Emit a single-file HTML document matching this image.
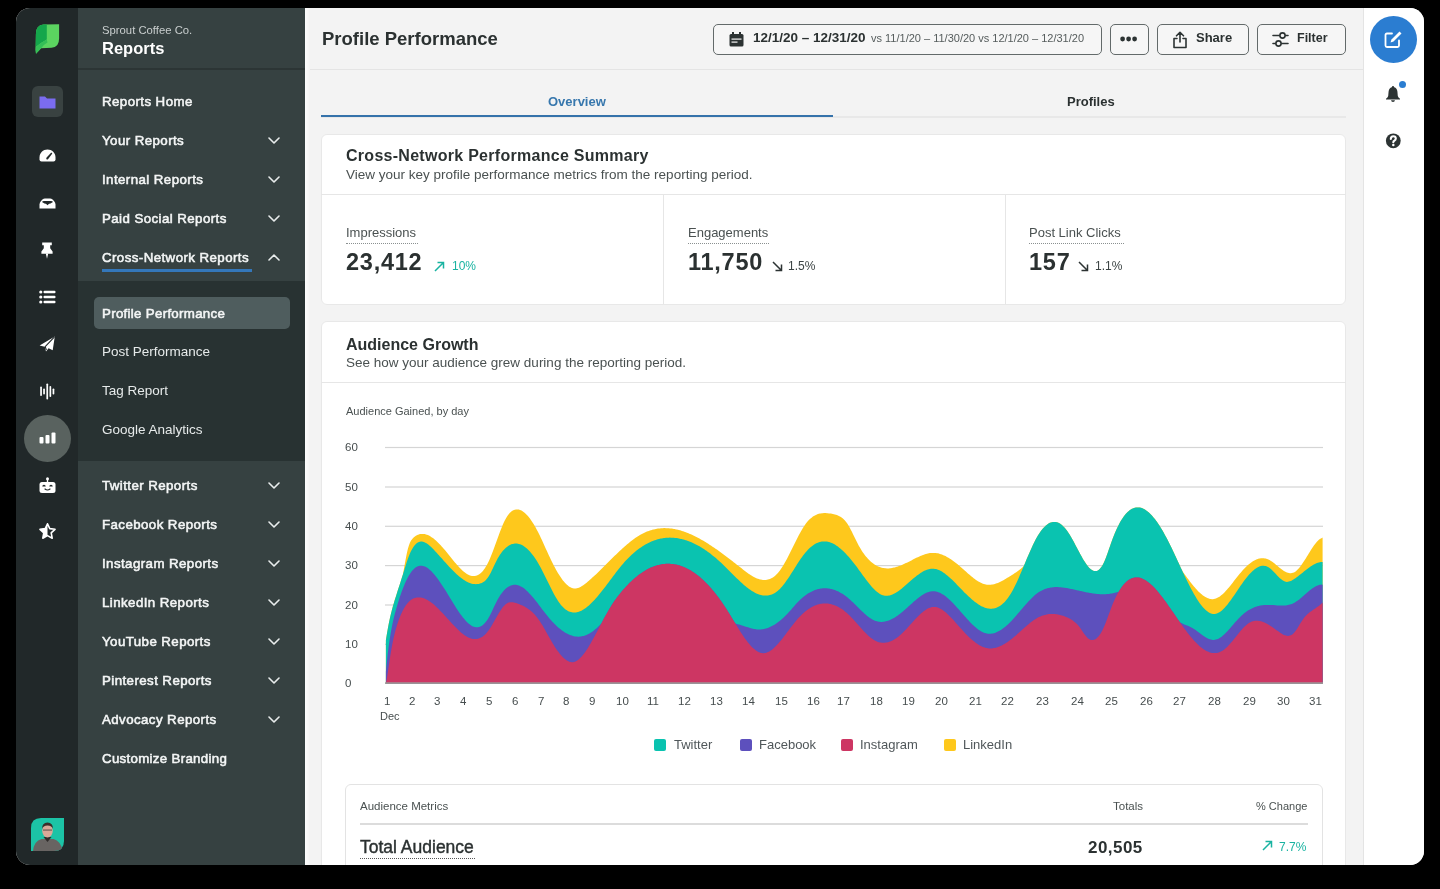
<!DOCTYPE html>
<html><head><meta charset="utf-8"><style>
*{box-sizing:border-box;margin:0;padding:0}
html,body{width:1440px;height:889px;overflow:hidden;background:#000}
body{font-family:"Liberation Sans",sans-serif;position:relative}
#win{position:absolute;left:0;top:0;width:1440px;height:889px;clip-path:inset(8px 16px 24px 16px round 14px);background:#f3f3f3;overflow:hidden}
.a{position:absolute;white-space:nowrap;will-change:transform}
svg.a{overflow:visible}
</style></head><body><div id="win">
<div class="a" style="left:16px;top:8px;width:62px;height:857px;background:#212829"></div>
<div class="a" style="left:78px;top:8px;width:227px;height:857px;background:#364141"></div>
<div class="a" style="left:78px;top:68px;width:227px;height:2px;background:#2c3535"></div>
<div class="a" style="left:78px;top:281px;width:227px;height:180px;background:#283232"></div>
<div class="a" style="left:1363px;top:8px;width:61px;height:857px;background:#fff;border-left:1px solid #e4e4e4"></div>
<div class="a" style="left:305px;top:69px;width:1058px;height:1px;background:#e4e4e4"></div>
<div class="a" style="left:305px;top:8px;width:5px;height:857px;background:linear-gradient(90deg,#fdfdfd,#f8f8f8 60%,#f3f3f3)"></div>
<svg class="a" style="left:34px;top:23px;" width="27" height="33" viewBox="0 0 27 33"><path d="M2 30.8 L7.1 25.2 L17.5 24.8 Q25.1 24.5 25.1 15.5 L25.1 1.3 L9.5 1.5 Q1.9 2 1.9 11 L1.6 26.9 Z" fill="#5bd460"/><path d="M1.9 11 Q1.9 2 9.5 1.5 L12.8 1.4 L12.8 16.5 Q8 19 1.7 24 Z" fill="#14a64b"/><path d="M1.7 24 Q8 19 12.8 16.5 L13.5 19.5 Q9 22 7.1 25.2 L2 30.8 L1.6 26.9 Z" fill="#34bf57"/></svg>
<div class="a" style="left:32px;top:86px;width:31px;height:31px;background:#394241;border-radius:6px"></div>
<svg class="a" style="left:39px;top:96px;" width="17" height="13" viewBox="0 0 17 13"><path d="M0.5 0.5 H6 L8 2.5 H16.5 V12.5 H0.5 Z" fill="#7b6cf0"/></svg>
<svg class="a" style="left:39px;top:149px;" width="17" height="13" viewBox="0 0 17 13"><path d="M8.5 0.5 C13 0.5 16.5 4 16.5 8.5 V10.5 Q16.5 12.5 14.5 12.5 H2.5 Q0.5 12.5 0.5 10.5 V8.5 C0.5 4 4 0.5 8.5 0.5 Z" fill="#fff"/><path d="M12.3 3.6 L13.3 4.6 L9.2 10 Q8.4 10.9 7.5 10.2 Q6.8 9.4 7.6 8.5 Z" fill="#212829"/></svg>
<svg class="a" style="left:39px;top:198px;" width="17" height="11" viewBox="0 0 17 11"><path d="M0.5 10.5 V6.5 Q0.5 4.5 2 3 L3.5 1.5 Q4.5 0.5 6 0.5 H11 Q12.5 0.5 13.5 1.5 L15 3 Q16.5 4.5 16.5 6.5 V10.5 Z" fill="#fff"/><path d="M3 4 Q3.5 3 5 3 H12 Q13.5 3 14 4 L11.5 5.5 Q10 5.5 9.5 6.3 L8.5 7.3 L7.5 6.3 Q7 5.5 5.5 5.5 Z" fill="#212829"/></svg>
<svg class="a" style="left:41px;top:240px;" width="12" height="19" viewBox="0 0 12 19"><path d="M1.2 2.5 H10.8 V5.2 H9.2 V8.2 L11.6 11.6 V13.8 H0.4 V11.6 L2.8 8.2 V5.2 H1.2 Z" fill="#fff"/><path d="M4.8 13.5 H7.2 L6 18.8 Z" fill="#fff"/></svg>
<svg class="a" style="left:39px;top:290px;" width="17" height="14" viewBox="0 0 17 14"><circle cx="1.8" cy="2" r="1.6" fill="#fff"/><circle cx="1.8" cy="7" r="1.6" fill="#fff"/><circle cx="1.8" cy="12" r="1.6" fill="#fff"/><rect x="4.5" y="0.7" width="12" height="2.6" rx="1" fill="#fff"/><rect x="4.5" y="5.7" width="12" height="2.6" rx="1" fill="#fff"/><rect x="4.5" y="10.7" width="12" height="2.6" rx="1" fill="#fff"/></svg>
<svg class="a" style="left:39px;top:336px;" width="17" height="16" viewBox="0 0 17 16"><path d="M15.8 0.4 L0.6 9.4 L5.8 10.8 L7 15.5 L9.6 12.3 L13.7 14.3 Z" fill="#fff"/><path d="M15.5 0.8 L6.2 10.6 L7.4 14" stroke="#212829" stroke-width="1.1" fill="none"/></svg>
<svg class="a" style="left:40px;top:383px;" width="15" height="17" viewBox="0 0 15 17"><rect x="0.2" y="3.5" width="1.7" height="9.5" rx=".8" fill="#fff"/><rect x="3.2" y="5.5" width="1.7" height="6" rx=".8" fill="#fff"/><rect x="6.4" y="0.5" width="1.7" height="16" rx=".8" fill="#fff"/><rect x="9.5" y="3" width="1.7" height="11" rx=".8" fill="#fff"/><rect x="12.6" y="5.5" width="1.7" height="6" rx=".8" fill="#fff"/></svg>
<div class="a" style="left:24px;top:415px;width:47px;height:47px;background:#59625f;border-radius:50%"></div>
<svg class="a" style="left:39px;top:432px;" width="17" height="12" viewBox="0 0 17 12"><rect x="0.5" y="5" width="4" height="6.5" rx="1" fill="#fff"/><rect x="6.5" y="3" width="4" height="8.5" rx="1" fill="#fff"/><rect x="12.5" y="0.5" width="4" height="11" rx="1" fill="#fff"/></svg>
<svg class="a" style="left:39px;top:477px;" width="17" height="17" viewBox="0 0 17 17"><circle cx="8.5" cy="1.8" r="1.5" fill="#fff"/><rect x="7.8" y="2.5" width="1.4" height="3" fill="#fff"/><rect x="0.5" y="5" width="16" height="11" rx="2.5" fill="#fff"/><path d="M4 9 Q5 8 6 9 M11 9 Q12 8 13 9 M6 12 Q8.5 14 11 12" stroke="#212829" stroke-width="1.2" fill="none" stroke-linecap="round"/></svg>
<svg class="a" style="left:39px;top:523px;" width="17" height="17" viewBox="0 0 17 17"><path d="M8.5 0.8 L10.8 5.6 L16 6.3 L12.2 9.9 L13.2 15.2 L8.5 12.6 L3.8 15.2 L4.8 9.9 L1 6.3 L6.2 5.6 Z" fill="none" stroke="#fff" stroke-width="1.6" stroke-linejoin="round"/><path d="M8.5 0.8 L6.2 5.6 L1 6.3 L4.8 9.9 L3.8 15.2 L8.5 12.6 Z" fill="#fff"/></svg>
<svg class="a" style="left:31px;top:818px;" width="33" height="33" viewBox="0 0 33 33"><defs><clipPath id="av"><path d="M0 10 Q0 0 10 0 H33 V23 Q33 33 23 33 H0 Z"/></clipPath></defs><g clip-path="url(#av)"><rect width="33" height="33" fill="#1cc3a6"/><path d="M2 33 Q3 23 10.5 21 L22.5 21 Q30 23 31.5 33 Z" fill="#686462"/><path d="M12.5 19 H20.5 L16.5 24 Z" fill="#2f2b2a"/><ellipse cx="16.5" cy="12.8" rx="5.3" ry="6.8" fill="#d9a898"/><path d="M11 11 Q11 4.5 16.5 4.5 Q22 4.5 22 11 Q21 7.5 16.5 7.5 Q12 7.5 11 11 Z" fill="#3b2e2a"/><rect x="12" y="11.3" width="9" height="1.6" fill="#4a4040" opacity=".55"/></g></svg>
<div class="a" style="left:102.00px;top:24.63px;font-size:11.3px;line-height:11.3px;color:#c9cece;">Sprout Coffee Co.</div>
<div class="a" style="left:102.00px;top:40.03px;font-size:16.5px;line-height:16.5px;font-weight:bold;color:#ffffff;">Reports</div>
<div class="a" style="left:102.00px;top:95.34px;font-size:13.3px;line-height:13.3px;color:#f4f6f6;letter-spacing:0.42px;-webkit-text-stroke:0.55px #f4f6f6;">Reports Home</div>
<div class="a" style="left:102.00px;top:134.34px;font-size:13.3px;line-height:13.3px;color:#f4f6f6;letter-spacing:0.42px;-webkit-text-stroke:0.55px #f4f6f6;">Your Reports</div>
<svg class="a" style="left:268.4px;top:136.5px;" width="12" height="7" viewBox="0 0 12 7"><path d="M1 1 L6 6 L11 1" fill="none" stroke="#e9eded" stroke-width="1.6" stroke-linecap="round" stroke-linejoin="round"/></svg>
<div class="a" style="left:102.00px;top:173.34px;font-size:13.3px;line-height:13.3px;color:#f4f6f6;letter-spacing:0.42px;-webkit-text-stroke:0.55px #f4f6f6;">Internal Reports</div>
<svg class="a" style="left:268.4px;top:175.5px;" width="12" height="7" viewBox="0 0 12 7"><path d="M1 1 L6 6 L11 1" fill="none" stroke="#e9eded" stroke-width="1.6" stroke-linecap="round" stroke-linejoin="round"/></svg>
<div class="a" style="left:102.00px;top:212.34px;font-size:13.3px;line-height:13.3px;color:#f4f6f6;letter-spacing:0.42px;-webkit-text-stroke:0.55px #f4f6f6;">Paid Social Reports</div>
<svg class="a" style="left:268.4px;top:214.5px;" width="12" height="7" viewBox="0 0 12 7"><path d="M1 1 L6 6 L11 1" fill="none" stroke="#e9eded" stroke-width="1.6" stroke-linecap="round" stroke-linejoin="round"/></svg>
<div class="a" style="left:102.00px;top:251.34px;font-size:13.3px;line-height:13.3px;color:#f4f6f6;letter-spacing:0.42px;-webkit-text-stroke:0.55px #f4f6f6;">Cross-Network Reports</div>
<svg class="a" style="left:268.4px;top:253.5px;" width="12" height="7" viewBox="0 0 12 7"><path d="M1 6 L6 1 L11 6" fill="none" stroke="#e9eded" stroke-width="1.6" stroke-linecap="round" stroke-linejoin="round"/></svg>
<div class="a" style="left:102px;top:269px;width:150px;height:2.6px;background:#3477ba"></div>
<div class="a" style="left:94px;top:297px;width:196px;height:32px;background:#4f5d5e;border-radius:5px"></div>
<div class="a" style="left:102.00px;top:306.54px;font-size:13.3px;line-height:13.3px;color:#f4f6f6;letter-spacing:0.3px;-webkit-text-stroke:0.55px #f4f6f6;">Profile Performance</div>
<div class="a" style="left:102.00px;top:344.77px;font-size:13.5px;line-height:13.5px;color:#e6eaea;">Post Performance</div>
<div class="a" style="left:102.00px;top:384.27px;font-size:13.5px;line-height:13.5px;color:#e6eaea;">Tag Report</div>
<div class="a" style="left:102.00px;top:423.27px;font-size:13.5px;line-height:13.5px;color:#e6eaea;">Google Analytics</div>
<div class="a" style="left:102.00px;top:479.34px;font-size:13.3px;line-height:13.3px;color:#f4f6f6;letter-spacing:0.42px;-webkit-text-stroke:0.55px #f4f6f6;">Twitter Reports</div>
<svg class="a" style="left:268.4px;top:481.5px;" width="12" height="7" viewBox="0 0 12 7"><path d="M1 1 L6 6 L11 1" fill="none" stroke="#e9eded" stroke-width="1.6" stroke-linecap="round" stroke-linejoin="round"/></svg>
<div class="a" style="left:102.00px;top:518.34px;font-size:13.3px;line-height:13.3px;color:#f4f6f6;letter-spacing:0.42px;-webkit-text-stroke:0.55px #f4f6f6;">Facebook Reports</div>
<svg class="a" style="left:268.4px;top:520.5px;" width="12" height="7" viewBox="0 0 12 7"><path d="M1 1 L6 6 L11 1" fill="none" stroke="#e9eded" stroke-width="1.6" stroke-linecap="round" stroke-linejoin="round"/></svg>
<div class="a" style="left:102.00px;top:557.34px;font-size:13.3px;line-height:13.3px;color:#f4f6f6;letter-spacing:0.42px;-webkit-text-stroke:0.55px #f4f6f6;">Instagram Reports</div>
<svg class="a" style="left:268.4px;top:559.5px;" width="12" height="7" viewBox="0 0 12 7"><path d="M1 1 L6 6 L11 1" fill="none" stroke="#e9eded" stroke-width="1.6" stroke-linecap="round" stroke-linejoin="round"/></svg>
<div class="a" style="left:102.00px;top:596.34px;font-size:13.3px;line-height:13.3px;color:#f4f6f6;letter-spacing:0.42px;-webkit-text-stroke:0.55px #f4f6f6;">LinkedIn Reports</div>
<svg class="a" style="left:268.4px;top:598.5px;" width="12" height="7" viewBox="0 0 12 7"><path d="M1 1 L6 6 L11 1" fill="none" stroke="#e9eded" stroke-width="1.6" stroke-linecap="round" stroke-linejoin="round"/></svg>
<div class="a" style="left:102.00px;top:635.34px;font-size:13.3px;line-height:13.3px;color:#f4f6f6;letter-spacing:0.42px;-webkit-text-stroke:0.55px #f4f6f6;">YouTube Reports</div>
<svg class="a" style="left:268.4px;top:637.5px;" width="12" height="7" viewBox="0 0 12 7"><path d="M1 1 L6 6 L11 1" fill="none" stroke="#e9eded" stroke-width="1.6" stroke-linecap="round" stroke-linejoin="round"/></svg>
<div class="a" style="left:102.00px;top:674.34px;font-size:13.3px;line-height:13.3px;color:#f4f6f6;letter-spacing:0.42px;-webkit-text-stroke:0.55px #f4f6f6;">Pinterest Reports</div>
<svg class="a" style="left:268.4px;top:676.5px;" width="12" height="7" viewBox="0 0 12 7"><path d="M1 1 L6 6 L11 1" fill="none" stroke="#e9eded" stroke-width="1.6" stroke-linecap="round" stroke-linejoin="round"/></svg>
<div class="a" style="left:102.00px;top:713.34px;font-size:13.3px;line-height:13.3px;color:#f4f6f6;letter-spacing:0.42px;-webkit-text-stroke:0.55px #f4f6f6;">Advocacy Reports</div>
<svg class="a" style="left:268.4px;top:715.5px;" width="12" height="7" viewBox="0 0 12 7"><path d="M1 1 L6 6 L11 1" fill="none" stroke="#e9eded" stroke-width="1.6" stroke-linecap="round" stroke-linejoin="round"/></svg>
<div class="a" style="left:102.00px;top:752.34px;font-size:13.3px;line-height:13.3px;color:#f4f6f6;letter-spacing:0.3px;-webkit-text-stroke:0.55px #f4f6f6;">Customize Branding</div>
<div class="a" style="left:322.00px;top:29.54px;font-size:18.5px;line-height:18.5px;font-weight:bold;color:#2b3131;">Profile Performance</div>
<div class="a" style="left:713px;top:24px;width:389px;height:31px;border:1.2px solid #636a6a;border-radius:5px;background:#f6f6f6"></div>
<div class="a" style="left:1110px;top:24px;width:39px;height:31px;border:1.2px solid #636a6a;border-radius:5px;background:#f6f6f6"></div>
<div class="a" style="left:1157px;top:24px;width:92px;height:31px;border:1.2px solid #636a6a;border-radius:5px;background:#f6f6f6"></div>
<div class="a" style="left:1257px;top:24px;width:89px;height:31px;border:1.2px solid #636a6a;border-radius:5px;background:#f6f6f6"></div>
<svg class="a" style="left:729px;top:32px;" width="15" height="15" viewBox="0 0 15 15"><rect x="0.5" y="2" width="14" height="12.5" rx="1.5" fill="#2c3333"/><rect x="3" y="0" width="2" height="3.5" fill="#2c3333"/><rect x="10" y="0" width="2" height="3.5" fill="#2c3333"/><rect x="2.5" y="6.5" width="10" height="1.2" fill="#f6f6f6"/><rect x="2.5" y="9.5" width="6" height="1.2" fill="#f6f6f6"/></svg>
<div class="a" style="left:752.50px;top:31.17px;font-size:13.5px;line-height:13.5px;font-weight:bold;color:#2b3131;">12/1/20 – 12/31/20</div>
<div class="a" style="left:871.00px;top:33.29px;font-size:11px;line-height:11px;color:#555c5c;">vs 11/1/20 – 11/30/20 vs 12/1/20 – 12/31/20</div>
<svg class="a" style="left:1120px;top:36px;" width="18" height="6" viewBox="0 0 18 6"><circle cx="2.6" cy="3" r="2.4" fill="#2c3333"/><circle cx="8.6" cy="3" r="2.4" fill="#2c3333"/><circle cx="14.6" cy="3" r="2.4" fill="#2c3333"/></svg>
<svg class="a" style="left:1172px;top:31px;" width="16" height="18" viewBox="0 0 16 18"><path d="M8 1.5 V11 M4.5 4.8 L8 1.3 L11.5 4.8 M5 7.5 H2 V16.5 H14 V7.5 H11" fill="none" stroke="#2c3333" stroke-width="1.6" stroke-linecap="round" stroke-linejoin="round"/></svg>
<div class="a" style="left:1196.00px;top:31.30px;font-size:13px;line-height:13px;font-weight:bold;color:#2b3131;">Share</div>
<svg class="a" style="left:1272px;top:31px;" width="17" height="17" viewBox="0 0 17 17"><path d="M1 4.5 H16 M1 12.5 H16" stroke="#2c3333" stroke-width="1.6" stroke-linecap="round"/><circle cx="10.5" cy="4.5" r="2.6" fill="#f6f6f6" stroke="#2c3333" stroke-width="1.6"/><circle cx="6.5" cy="12.5" r="2.6" fill="#f6f6f6" stroke="#2c3333" stroke-width="1.6"/></svg>
<div class="a" style="left:1297.00px;top:32.12px;font-size:12.5px;line-height:12.5px;font-weight:bold;color:#2b3131;">Filter</div>
<div class="a" style="left:548.40px;top:94.90px;font-size:13px;line-height:13px;font-weight:bold;color:#3777ad;">Overview</div>
<div class="a" style="left:1066.60px;top:95.20px;font-size:13px;line-height:13px;font-weight:bold;color:#2b3131;">Profiles</div>
<div class="a" style="left:321px;top:115.5px;width:1025px;height:2px;background:#e8e8e8"></div>
<div class="a" style="left:321px;top:115.3px;width:512px;height:2.3px;background:#3572aa"></div>
<div class="a" style="left:321px;top:134px;width:1025px;height:171px;background:#fff;border:1px solid #e8e8e8;border-radius:6px"></div>
<div class="a" style="left:321px;top:194px;width:1025px;height:1px;background:#e6e6e6"></div>
<div class="a" style="left:663px;top:195px;width:1px;height:109px;background:#e6e6e6"></div>
<div class="a" style="left:1005px;top:195px;width:1px;height:109px;background:#e6e6e6"></div>
<div class="a" style="left:345.80px;top:148.26px;font-size:16px;line-height:16px;font-weight:bold;color:#2b3131;letter-spacing:0.28px;">Cross-Network Performance Summary</div>
<div class="a" style="left:345.80px;top:167.77px;font-size:13.5px;line-height:13.5px;color:#4a5151;">View your key profile performance metrics from the reporting period.</div>
<div class="a" style="left:345.80px;top:225.70px;font-size:13px;line-height:13px;color:#4a5151;">Impressions</div>
<div class="a" style="left:345.8px;top:243px;width:72px;height:2px;border-top:1.5px dotted #8a9090"></div>
<div class="a" style="left:345.80px;top:250.71px;font-size:23.5px;line-height:23.5px;font-weight:bold;color:#2b3131;letter-spacing:0.75px;">23,412</div>
<div class="a" style="left:688.00px;top:225.70px;font-size:13px;line-height:13px;color:#4a5151;">Engagements</div>
<div class="a" style="left:688px;top:243px;width:81px;height:2px;border-top:1.5px dotted #8a9090"></div>
<div class="a" style="left:688.00px;top:250.71px;font-size:23.5px;line-height:23.5px;font-weight:bold;color:#2b3131;letter-spacing:0.75px;">11,750</div>
<div class="a" style="left:1029.30px;top:225.70px;font-size:13px;line-height:13px;color:#4a5151;">Post Link Clicks</div>
<div class="a" style="left:1029.3px;top:243px;width:95px;height:2px;border-top:1.5px dotted #8a9090"></div>
<div class="a" style="left:1029.30px;top:250.71px;font-size:23.5px;line-height:23.5px;font-weight:bold;color:#2b3131;letter-spacing:0.75px;">157</div>
<svg class="a" style="left:434px;top:261px;" width="11" height="11" viewBox="0 0 11 11"><path d="M1 10 L9.5 1.5 M3.5 1.5 H9.5 V7.5" fill="none" stroke="#19b3a1" stroke-width="1.5"/></svg>
<div class="a" style="left:452.00px;top:259.84px;font-size:12px;line-height:12px;color:#19b3a1;">10%</div>
<svg class="a" style="left:772px;top:261px;" width="11" height="11" viewBox="0 0 11 11"><path d="M1 1 L9.5 9.5 M3.5 9.5 H9.5 V3.5" fill="none" stroke="#2c3333" stroke-width="1.5"/></svg>
<div class="a" style="left:788.40px;top:259.84px;font-size:12px;line-height:12px;color:#3c4444;">1.5%</div>
<svg class="a" style="left:1078px;top:261px;" width="11" height="11" viewBox="0 0 11 11"><path d="M1 1 L9.5 9.5 M3.5 9.5 H9.5 V3.5" fill="none" stroke="#2c3333" stroke-width="1.5"/></svg>
<div class="a" style="left:1094.80px;top:259.84px;font-size:12px;line-height:12px;color:#3c4444;">1.1%</div>
<div class="a" style="left:321px;top:321px;width:1025px;height:600px;background:#fff;border:1px solid #e8e8e8;border-radius:6px"></div>
<div class="a" style="left:321px;top:382px;width:1025px;height:1px;background:#e6e6e6"></div>
<div class="a" style="left:345.80px;top:337.26px;font-size:16px;line-height:16px;font-weight:bold;color:#2b3131;">Audience Growth</div>
<div class="a" style="left:345.80px;top:355.77px;font-size:13.5px;line-height:13.5px;color:#4a5151;">See how your audience grew during the reporting period.</div>
<div class="a" style="left:345.80px;top:406.49px;font-size:11px;line-height:11px;color:#4a5151;">Audience Gained, by day</div>
<div class="a" style="left:344.90px;top:442.07px;font-size:11.5px;line-height:11.5px;color:#464d4e;">60</div>
<div class="a" style="left:344.90px;top:481.57px;font-size:11.5px;line-height:11.5px;color:#464d4e;">50</div>
<div class="a" style="left:344.90px;top:520.87px;font-size:11.5px;line-height:11.5px;color:#464d4e;">40</div>
<div class="a" style="left:344.90px;top:560.17px;font-size:11.5px;line-height:11.5px;color:#464d4e;">30</div>
<div class="a" style="left:344.90px;top:599.57px;font-size:11.5px;line-height:11.5px;color:#464d4e;">20</div>
<div class="a" style="left:344.90px;top:638.87px;font-size:11.5px;line-height:11.5px;color:#464d4e;">10</div>
<div class="a" style="left:344.90px;top:678.17px;font-size:11.5px;line-height:11.5px;color:#464d4e;">0</div>
<svg class="a" style="left:0px;top:0px;pointer-events:none" width="1440" height="889" viewBox="0 0 1440 889"><rect x="385" y="446.9" width="938" height="1.2" fill="#d5d5d5"/><rect x="385" y="486.4" width="938" height="1.2" fill="#d5d5d5"/><rect x="385" y="525.7" width="938" height="1.2" fill="#d5d5d5"/><rect x="385" y="565.0" width="938" height="1.2" fill="#d5d5d5"/><rect x="385" y="604.4" width="938" height="1.2" fill="#d5d5d5"/><rect x="385" y="643.7" width="938" height="1.2" fill="#d5d5d5"/><path fill="#fec81c" d="M385.9 683.6 L385.9 640.2 386.9 633.9 387.9 628.2 388.9 623.0 389.9 618.3 390.9 614.0 391.9 610.0 392.9 606.3 393.9 602.9 394.9 599.6 395.9 596.4 396.9 593.2 397.9 590.1 398.9 587.0 399.9 583.9 400.9 580.8 401.9 577.6 402.9 574.5 403.9 569.1 404.9 563.4 405.9 557.9 406.9 553.0 407.9 548.8 408.9 545.4 409.9 542.8 410.9 540.8 411.9 539.4 412.9 538.2 413.9 537.3 414.9 536.5 415.9 535.8 416.9 535.3 417.9 534.8 418.9 534.4 419.9 534.1 420.9 534.0 421.9 533.9 422.9 533.9 423.9 533.9 424.9 534.1 425.9 534.4 426.9 534.7 427.9 535.1 428.9 535.6 429.9 536.1 430.9 536.7 431.9 537.4 432.9 538.1 433.9 538.8 434.9 539.7 435.9 540.5 436.9 541.5 437.9 542.4 438.9 543.4 439.9 544.5 440.9 545.6 441.9 546.7 442.9 547.8 443.9 548.9 444.9 550.1 445.9 551.3 446.9 552.5 447.9 553.8 448.9 555.0 449.9 556.2 450.9 557.5 451.9 558.7 452.9 559.9 453.9 561.2 454.9 562.4 455.9 563.5 456.9 564.7 457.9 565.8 458.9 566.9 459.9 568.0 460.9 569.0 461.9 570.0 462.9 570.9 463.9 571.7 464.9 572.5 465.9 573.2 466.9 573.9 467.9 574.5 468.9 575.0 469.9 575.4 470.9 575.7 471.9 575.9 472.9 576.0 473.9 576.1 474.9 576.0 475.9 575.8 476.9 575.5 477.9 575.0 478.9 574.5 479.9 573.8 480.9 573.0 481.9 572.0 482.9 570.9 483.9 569.6 484.9 568.2 485.9 566.6 486.9 564.9 487.9 563.0 488.9 560.9 489.9 558.7 490.9 556.3 491.9 553.8 492.9 551.2 493.9 548.5 494.9 545.8 495.9 543.0 496.9 540.2 497.9 537.5 498.9 534.7 499.9 532.1 500.9 529.4 501.9 526.9 502.9 524.6 503.9 522.3 504.9 520.3 505.9 518.4 506.9 516.7 507.9 515.2 508.9 513.9 509.9 512.8 510.9 511.9 511.9 511.1 512.9 510.4 513.9 510.0 514.9 509.7 515.9 509.5 516.9 509.4 517.9 509.5 518.9 509.6 519.9 509.9 520.9 510.3 521.9 510.8 522.9 511.5 523.9 512.2 524.9 513.0 525.9 513.9 526.9 514.9 527.9 516.1 528.9 517.3 529.9 518.5 530.9 519.9 531.9 521.4 532.9 522.9 533.9 524.6 534.9 526.2 535.9 528.0 536.9 529.9 537.9 531.8 538.9 533.7 539.9 535.8 540.9 537.9 541.9 540.0 542.9 542.2 543.9 544.4 544.9 546.7 545.9 548.9 546.9 551.1 547.9 553.3 548.9 555.5 549.9 557.6 550.9 559.7 551.9 561.8 552.9 563.8 553.9 565.7 554.9 567.6 555.9 569.5 556.9 571.2 557.9 572.9 558.9 574.6 559.9 576.1 560.9 577.6 561.9 579.0 562.9 580.4 563.9 581.6 564.9 582.7 565.9 583.8 566.9 584.8 567.9 585.6 568.9 586.4 569.9 587.0 570.9 587.6 571.9 588.0 572.9 588.3 573.9 588.5 574.9 588.6 575.9 588.5 576.9 588.3 577.9 588.1 578.9 587.7 579.9 587.2 580.9 586.7 581.9 586.1 582.9 585.4 583.9 584.7 584.9 584.0 585.9 583.2 586.9 582.4 587.9 581.5 588.9 580.7 589.9 579.8 590.9 578.9 591.9 578.0 592.9 577.1 593.9 576.2 594.9 575.3 595.9 574.4 596.9 573.4 597.9 572.4 598.9 571.5 599.9 570.5 600.9 569.5 601.9 568.5 602.9 567.6 603.9 566.6 604.9 565.6 605.9 564.6 606.9 563.6 607.9 562.6 608.9 561.6 609.9 560.6 610.9 559.6 611.9 558.6 612.9 557.6 613.9 556.6 614.9 555.6 615.9 554.7 616.9 553.7 617.9 552.7 618.9 551.8 619.9 550.8 620.9 549.9 621.9 549.0 622.9 548.1 623.9 547.2 624.9 546.3 625.9 545.4 626.9 544.5 627.9 543.7 628.9 542.9 629.9 542.1 630.9 541.3 631.9 540.5 632.9 539.7 633.9 539.0 634.9 538.3 635.9 537.6 636.9 536.9 637.9 536.3 638.9 535.7 639.9 535.1 640.9 534.5 641.9 533.9 642.9 533.4 643.9 532.9 644.9 532.5 645.9 532.0 646.9 531.6 647.9 531.2 648.9 530.9 649.9 530.5 650.9 530.2 651.9 529.9 652.9 529.6 653.9 529.4 654.9 529.2 655.9 529.0 656.9 528.8 657.9 528.6 658.9 528.5 659.9 528.4 660.9 528.3 661.9 528.2 662.9 528.2 663.9 528.1 664.9 528.1 665.9 528.2 666.9 528.2 667.9 528.2 668.9 528.3 669.9 528.4 670.9 528.5 671.9 528.6 672.9 528.8 673.9 529.0 674.9 529.1 675.9 529.4 676.9 529.6 677.9 529.8 678.9 530.1 679.9 530.3 680.9 530.6 681.9 530.9 682.9 531.2 683.9 531.6 684.9 531.9 685.9 532.3 686.9 532.7 687.9 533.1 688.9 533.5 689.9 533.9 690.9 534.3 691.9 534.8 692.9 535.2 693.9 535.7 694.9 536.2 695.9 536.7 696.9 537.2 697.9 537.7 698.9 538.3 699.9 538.8 700.9 539.4 701.9 540.0 702.9 540.5 703.9 541.1 704.9 541.7 705.9 542.3 706.9 543.0 707.9 543.6 708.9 544.2 709.9 544.9 710.9 545.5 711.9 546.2 712.9 546.9 713.9 547.6 714.9 548.2 715.9 548.9 716.9 549.6 717.9 550.3 718.9 551.1 719.9 551.8 720.9 552.5 721.9 553.2 722.9 554.0 723.9 554.7 724.9 555.5 725.9 556.2 726.9 557.0 727.9 557.7 728.9 558.5 729.9 559.3 730.9 560.0 731.9 560.8 732.9 561.6 733.9 562.4 734.9 563.1 735.9 563.9 736.9 564.7 737.9 565.5 738.9 566.3 739.9 567.1 740.9 567.8 741.9 568.6 742.9 569.4 743.9 570.2 744.9 571.0 745.9 571.7 746.9 572.4 747.9 573.2 748.9 573.9 749.9 574.5 750.9 575.2 751.9 575.8 752.9 576.4 753.9 576.9 754.9 577.5 755.9 577.9 756.9 578.4 757.9 578.8 758.9 579.1 759.9 579.4 760.9 579.6 761.9 579.8 762.9 579.9 763.9 580.0 764.9 580.0 765.9 579.9 766.9 579.8 767.9 579.6 768.9 579.3 769.9 578.9 770.9 578.5 771.9 578.0 772.9 577.4 773.9 576.7 774.9 575.9 775.9 575.0 776.9 574.0 777.9 572.9 778.9 571.7 779.9 570.5 780.9 569.1 781.9 567.6 782.9 566.0 783.9 564.3 784.9 562.6 785.9 560.8 786.9 558.9 787.9 557.0 788.9 555.1 789.9 553.1 790.9 551.0 791.9 549.0 792.9 547.0 793.9 544.9 794.9 542.9 795.9 540.9 796.9 538.9 797.9 537.0 798.9 535.1 799.9 533.2 800.9 531.4 801.9 529.7 802.9 528.0 803.9 526.4 804.9 524.9 805.9 523.6 806.9 522.3 807.9 521.1 808.9 520.0 809.9 519.1 810.9 518.2 811.9 517.4 812.9 516.6 813.9 516.0 814.9 515.4 815.9 514.9 816.9 514.5 817.9 514.1 818.9 513.8 819.9 513.6 820.9 513.4 821.9 513.3 822.9 513.2 823.9 513.1 824.9 513.1 825.9 513.1 826.9 513.2 827.9 513.3 828.9 513.4 829.9 513.5 830.9 513.6 831.9 513.8 832.9 514.0 833.9 514.2 834.9 514.4 835.9 514.7 836.9 515.0 837.9 515.4 838.9 515.9 839.9 516.4 840.9 517.0 841.9 517.8 842.9 518.6 843.9 519.5 844.9 520.6 845.9 521.8 846.9 523.1 847.9 524.6 848.9 526.2 849.9 528.0 850.9 529.9 851.9 531.8 852.9 533.9 853.9 536.0 854.9 538.0 855.9 540.1 856.9 542.1 857.9 544.0 858.9 545.9 859.9 547.6 860.9 549.3 861.9 550.9 862.9 552.4 863.9 553.8 864.9 555.2 865.9 556.4 866.9 557.6 867.9 558.8 868.9 559.8 869.9 560.8 870.9 561.7 871.9 562.6 872.9 563.3 873.9 564.1 874.9 564.7 875.9 565.3 876.9 565.9 877.9 566.3 878.9 566.8 879.9 567.1 880.9 567.5 881.9 567.7 882.9 568.0 883.9 568.1 884.9 568.3 885.9 568.3 886.9 568.4 887.9 568.4 888.9 568.4 889.9 568.3 890.9 568.2 891.9 568.0 892.9 567.8 893.9 567.6 894.9 567.4 895.9 567.1 896.9 566.8 897.9 566.5 898.9 566.1 899.9 565.8 900.9 565.4 901.9 564.9 902.9 564.5 903.9 564.1 904.9 563.6 905.9 563.1 906.9 562.7 907.9 562.2 908.9 561.7 909.9 561.2 910.9 560.7 911.9 560.2 912.9 559.6 913.9 559.1 914.9 558.6 915.9 558.1 916.9 557.6 917.9 557.2 918.9 556.7 919.9 556.3 920.9 555.8 921.9 555.4 922.9 555.0 923.9 554.7 924.9 554.3 925.9 554.0 926.9 553.8 927.9 553.5 928.9 553.3 929.9 553.1 930.9 553.0 931.9 552.9 932.9 552.9 933.9 552.9 934.9 552.9 935.9 553.0 936.9 553.2 937.9 553.3 938.9 553.6 939.9 553.9 940.9 554.2 941.9 554.5 942.9 554.9 943.9 555.4 944.9 555.8 945.9 556.3 946.9 556.9 947.9 557.4 948.9 558.0 949.9 558.7 950.9 559.3 951.9 560.0 952.9 560.7 953.9 561.5 954.9 562.2 955.9 563.0 956.9 563.8 957.9 564.6 958.9 565.5 959.9 566.3 960.9 567.2 961.9 568.1 962.9 568.9 963.9 569.8 964.9 570.7 965.9 571.6 966.9 572.5 967.9 573.4 968.9 574.3 969.9 575.1 970.9 576.0 971.9 576.8 972.9 577.6 973.9 578.4 974.9 579.1 975.9 579.9 976.9 580.5 977.9 581.2 978.9 581.8 979.9 582.3 980.9 582.8 981.9 583.3 982.9 583.7 983.9 584.0 984.9 584.3 985.9 584.6 986.9 584.7 987.9 584.8 988.9 584.8 989.9 584.8 990.9 584.7 991.9 584.6 992.9 584.4 993.9 584.2 994.9 583.9 995.9 583.6 996.9 583.2 997.9 582.9 998.9 582.4 999.9 582.0 1000.9 581.5 1001.9 581.0 1002.9 580.5 1003.9 579.9 1004.9 579.3 1005.9 578.7 1006.9 578.1 1007.9 577.5 1008.9 576.9 1009.9 576.3 1010.9 575.7 1011.9 575.0 1012.9 574.4 1013.9 573.8 1014.9 573.1 1015.9 572.5 1016.9 571.8 1017.9 571.1 1018.9 570.3 1019.9 569.5 1020.9 568.7 1021.9 567.8 1022.9 566.9 1023.9 565.7 1024.9 563.4 1025.9 561.0 1026.9 558.6 1027.9 556.3 1028.9 554.0 1029.9 551.7 1030.9 549.4 1031.9 547.2 1032.9 545.1 1033.9 543.0 1034.9 541.1 1035.9 539.1 1036.9 537.3 1037.9 535.6 1038.9 534.0 1039.9 532.5 1040.9 531.0 1041.9 529.7 1042.9 528.5 1043.9 527.4 1044.9 526.4 1045.9 525.5 1046.9 524.7 1047.9 523.9 1048.9 523.3 1049.9 522.8 1050.9 522.4 1051.9 522.2 1052.9 522.0 1053.9 521.9 1054.9 521.9 1055.9 522.0 1056.9 522.3 1057.9 522.6 1058.9 523.1 1059.9 523.6 1060.9 524.3 1061.9 525.0 1062.9 525.9 1063.9 526.9 1064.9 528.0 1065.9 529.2 1066.9 530.5 1067.9 531.9 1068.9 533.4 1069.9 535.0 1070.9 536.7 1071.9 538.5 1072.9 540.3 1073.9 542.1 1074.9 544.0 1075.9 545.9 1076.9 547.8 1077.9 549.7 1078.9 551.6 1079.9 553.5 1080.9 555.3 1081.9 557.1 1082.9 558.9 1083.9 560.5 1084.9 562.1 1085.9 563.6 1086.9 565.0 1087.9 566.3 1088.9 567.4 1089.9 568.4 1090.9 569.3 1091.9 570.0 1092.9 570.6 1093.9 570.9 1094.9 571.1 1095.9 571.1 1096.9 570.9 1097.9 570.4 1098.9 569.7 1099.9 568.8 1100.9 567.6 1101.9 566.2 1102.9 564.5 1103.9 562.4 1104.9 560.2 1105.9 557.7 1106.9 555.0 1107.9 552.2 1108.9 549.3 1109.9 546.4 1110.9 543.5 1111.9 540.7 1112.9 538.0 1113.9 535.4 1114.9 533.0 1115.9 530.7 1116.9 528.4 1117.9 526.4 1118.9 524.4 1119.9 522.5 1120.9 520.8 1121.9 519.2 1122.9 517.7 1123.9 516.3 1124.9 515.0 1125.9 513.8 1126.9 512.7 1127.9 511.7 1128.9 510.9 1129.9 510.1 1130.9 509.4 1131.9 508.8 1132.9 508.4 1133.9 508.0 1134.9 507.7 1135.9 507.5 1136.9 507.4 1137.9 507.4 1138.9 507.4 1139.9 507.6 1140.9 507.8 1141.9 508.1 1142.9 508.5 1143.9 509.0 1144.9 509.6 1145.9 510.2 1146.9 510.9 1147.9 511.7 1148.9 512.6 1149.9 513.5 1150.9 514.5 1151.9 515.6 1152.9 516.7 1153.9 517.9 1154.9 519.1 1155.9 520.5 1156.9 521.8 1157.9 523.3 1158.9 524.8 1159.9 526.3 1160.9 527.9 1161.9 529.6 1162.9 531.3 1163.9 533.1 1164.9 534.9 1165.9 536.7 1166.9 538.6 1167.9 540.5 1168.9 542.5 1169.9 544.5 1170.9 546.6 1171.9 548.6 1172.9 550.7 1173.9 552.8 1174.9 555.0 1175.9 557.1 1176.9 559.2 1177.9 561.4 1178.9 563.6 1179.9 565.7 1180.9 567.9 1181.9 570.0 1182.9 571.9 1183.9 573.3 1184.9 574.7 1185.9 576.1 1186.9 577.4 1187.9 578.8 1188.9 580.1 1189.9 581.4 1190.9 582.7 1191.9 584.0 1192.9 585.2 1193.9 586.4 1194.9 587.6 1195.9 588.7 1196.9 589.8 1197.9 590.9 1198.9 591.9 1199.9 592.8 1200.9 593.7 1201.9 594.6 1202.9 595.4 1203.9 596.1 1204.9 596.7 1205.9 597.3 1206.9 597.8 1207.9 598.3 1208.9 598.6 1209.9 598.9 1210.9 599.1 1211.9 599.2 1212.9 599.2 1213.9 599.1 1214.9 598.8 1215.9 598.5 1216.9 598.1 1217.9 597.6 1218.9 597.0 1219.9 596.4 1220.9 595.6 1221.9 594.8 1222.9 593.9 1223.9 592.9 1224.9 591.9 1225.9 590.8 1226.9 589.7 1227.9 588.6 1228.9 587.4 1229.9 586.2 1230.9 584.9 1231.9 583.7 1232.9 582.4 1233.9 581.1 1234.9 579.8 1235.9 578.5 1236.9 577.3 1237.9 576.0 1238.9 574.8 1239.9 573.6 1240.9 572.4 1241.9 571.2 1242.9 570.1 1243.9 569.0 1244.9 568.0 1245.9 567.0 1246.9 566.0 1247.9 565.1 1248.9 564.3 1249.9 563.5 1250.9 562.7 1251.9 562.0 1252.9 561.3 1253.9 560.7 1254.9 560.2 1255.9 559.7 1256.9 559.3 1257.9 558.9 1258.9 558.6 1259.9 558.4 1260.9 558.3 1261.9 558.2 1262.9 558.2 1263.9 558.2 1264.9 558.4 1265.9 558.6 1266.9 558.9 1267.9 559.3 1268.9 559.7 1269.9 560.3 1270.9 560.9 1271.9 561.5 1272.9 562.3 1273.9 563.0 1274.9 563.8 1275.9 564.7 1276.9 565.5 1277.9 566.3 1278.9 567.2 1279.9 568.0 1280.9 568.8 1281.9 569.5 1282.9 570.3 1283.9 570.9 1284.9 571.5 1285.9 572.0 1286.9 572.5 1287.9 572.8 1288.9 573.1 1289.9 573.2 1290.9 573.2 1291.9 573.1 1292.9 572.8 1293.9 572.4 1294.9 571.9 1295.9 571.2 1296.9 570.3 1297.9 569.3 1298.9 568.2 1299.9 567.0 1300.9 565.7 1301.9 564.3 1302.9 562.8 1303.9 561.3 1304.9 559.8 1305.9 558.2 1306.9 556.5 1307.9 554.9 1308.9 553.3 1309.9 551.7 1310.9 550.1 1311.9 548.6 1312.9 547.1 1313.9 545.6 1314.9 544.3 1315.9 543.0 1316.9 541.8 1317.9 540.8 1318.9 539.8 1319.9 539.0 1320.9 538.4 1321.9 537.9 1322.6 537.6 1322.6 683.6 Z"/>
<path fill="#0ac3b0" d="M385.9 683.6 L385.9 640.2 386.9 633.9 387.9 628.2 388.9 623.0 389.9 618.3 390.9 614.0 391.9 610.0 392.9 606.3 393.9 602.9 394.9 599.6 395.9 596.4 396.9 593.2 397.9 590.1 398.9 587.0 399.9 583.9 400.9 580.8 401.9 577.6 402.9 574.5 403.9 571.3 404.9 568.0 405.9 564.8 406.9 561.6 407.9 558.7 408.9 556.0 409.9 553.5 410.9 551.3 411.9 549.4 412.9 547.7 413.9 546.2 414.9 545.0 415.9 543.9 416.9 543.1 417.9 542.5 418.9 542.0 419.9 541.7 420.9 541.5 421.9 541.6 422.9 541.7 423.9 542.0 424.9 542.4 425.9 542.9 426.9 543.5 427.9 544.2 428.9 545.0 429.9 545.9 430.9 546.8 431.9 547.8 432.9 548.8 433.9 549.8 434.9 550.9 435.9 552.0 436.9 553.1 437.9 554.2 438.9 555.3 439.9 556.4 440.9 557.5 441.9 558.6 442.9 559.8 443.9 560.9 444.9 562.0 445.9 563.1 446.9 564.2 447.9 565.3 448.9 566.4 449.9 567.5 450.9 568.5 451.9 569.6 452.9 570.6 453.9 571.6 454.9 572.6 455.9 573.5 456.9 574.4 457.9 575.3 458.9 576.2 459.9 577.0 460.9 577.8 461.9 578.6 462.9 579.3 463.9 580.0 464.9 580.6 465.9 581.2 466.9 581.7 467.9 582.2 468.9 582.7 469.9 583.1 470.9 583.4 471.9 583.7 472.9 583.9 473.9 584.1 474.9 584.1 475.9 584.2 476.9 584.1 477.9 584.0 478.9 583.9 479.9 583.6 480.9 583.3 481.9 582.9 482.9 582.3 483.9 581.7 484.9 580.9 485.9 579.9 486.9 578.8 487.9 577.5 488.9 576.0 489.9 574.2 490.9 572.4 491.9 570.3 492.9 568.3 493.9 566.1 494.9 564.0 495.9 562.0 496.9 560.0 497.9 558.1 498.9 556.4 499.9 554.8 500.9 553.4 501.9 552.0 502.9 550.8 503.9 549.7 504.9 548.7 505.9 547.7 506.9 546.9 507.9 546.2 508.9 545.5 509.9 545.0 510.9 544.5 511.9 544.1 512.9 543.9 513.9 543.7 514.9 543.5 515.9 543.5 516.9 543.6 517.9 543.7 518.9 543.9 519.9 544.2 520.9 544.6 521.9 545.1 522.9 545.6 523.9 546.3 524.9 547.0 525.9 547.7 526.9 548.6 527.9 549.5 528.9 550.5 529.9 551.6 530.9 552.7 531.9 554.0 532.9 555.3 533.9 556.6 534.9 558.1 535.9 559.6 536.9 561.1 537.9 562.8 538.9 564.5 539.9 566.3 540.9 568.1 541.9 570.0 542.9 571.9 543.9 573.9 544.9 575.9 545.9 577.9 546.9 580.0 547.9 582.0 548.9 584.1 549.9 586.1 550.9 588.1 551.9 590.0 552.9 592.0 553.9 593.9 554.9 595.7 555.9 597.4 556.9 599.1 557.9 600.7 558.9 602.2 559.9 603.6 560.9 604.9 561.9 606.0 562.9 607.1 563.9 608.1 564.9 608.9 565.9 609.7 566.9 610.3 567.9 610.9 568.9 611.4 569.9 611.8 570.9 612.1 571.9 612.3 572.9 612.4 573.9 612.5 574.9 612.5 575.9 612.4 576.9 612.2 577.9 612.0 578.9 611.7 579.9 611.3 580.9 610.9 581.9 610.4 582.9 609.8 583.9 609.2 584.9 608.6 585.9 607.9 586.9 607.1 587.9 606.3 588.9 605.4 589.9 604.5 590.9 603.6 591.9 602.6 592.9 601.6 593.9 600.5 594.9 599.5 595.9 598.3 596.9 597.2 597.9 596.0 598.9 594.8 599.9 593.6 600.9 592.3 601.9 591.1 602.9 589.8 603.9 588.5 604.9 587.2 605.9 585.9 606.9 584.5 607.9 583.2 608.9 581.9 609.9 580.5 610.9 579.2 611.9 577.9 612.9 576.5 613.9 575.2 614.9 573.9 615.9 572.6 616.9 571.3 617.9 570.0 618.9 568.7 619.9 567.5 620.9 566.3 621.9 565.1 622.9 563.9 623.9 562.8 624.9 561.6 625.9 560.5 626.9 559.5 627.9 558.4 628.9 557.4 629.9 556.4 630.9 555.5 631.9 554.6 632.9 553.7 633.9 552.8 634.9 551.9 635.9 551.1 636.9 550.3 637.9 549.5 638.9 548.8 639.9 548.1 640.9 547.4 641.9 546.7 642.9 546.0 643.9 545.4 644.9 544.8 645.9 544.3 646.9 543.7 647.9 543.2 648.9 542.7 649.9 542.2 650.9 541.8 651.9 541.3 652.9 540.9 653.9 540.6 654.9 540.2 655.9 539.9 656.9 539.6 657.9 539.3 658.9 539.0 659.9 538.8 660.9 538.6 661.9 538.4 662.9 538.2 663.9 538.1 664.9 537.9 665.9 537.8 666.9 537.8 667.9 537.7 668.9 537.7 669.9 537.6 670.9 537.7 671.9 537.7 672.9 537.7 673.9 537.8 674.9 537.9 675.9 538.0 676.9 538.1 677.9 538.3 678.9 538.5 679.9 538.7 680.9 538.9 681.9 539.1 682.9 539.4 683.9 539.6 684.9 539.9 685.9 540.2 686.9 540.6 687.9 540.9 688.9 541.3 689.9 541.7 690.9 542.1 691.9 542.5 692.9 543.0 693.9 543.5 694.9 543.9 695.9 544.4 696.9 545.0 697.9 545.5 698.9 546.1 699.9 546.6 700.9 547.2 701.9 547.8 702.9 548.5 703.9 549.1 704.9 549.8 705.9 550.4 706.9 551.1 707.9 551.9 708.9 552.6 709.9 553.3 710.9 554.1 711.9 554.9 712.9 555.7 713.9 556.5 714.9 557.3 715.9 558.1 716.9 559.0 717.9 559.9 718.9 560.8 719.9 561.7 720.9 562.6 721.9 563.5 722.9 564.5 723.9 565.4 724.9 566.4 725.9 567.4 726.9 568.4 727.9 569.4 728.9 570.4 729.9 571.4 730.9 572.4 731.9 573.4 732.9 574.4 733.9 575.4 734.9 576.4 735.9 577.4 736.9 578.4 737.9 579.3 738.9 580.3 739.9 581.2 740.9 582.2 741.9 583.1 742.9 584.0 743.9 584.9 744.9 585.7 745.9 586.5 746.9 587.4 747.9 588.1 748.9 588.9 749.9 589.6 750.9 590.3 751.9 590.9 752.9 591.6 753.9 592.1 754.9 592.7 755.9 593.2 756.9 593.7 757.9 594.1 758.9 594.4 759.9 594.8 760.9 595.0 761.9 595.3 762.9 595.4 763.9 595.6 764.9 595.6 765.9 595.6 766.9 595.6 767.9 595.5 768.9 595.3 769.9 595.1 770.9 594.8 771.9 594.4 772.9 594.0 773.9 593.5 774.9 592.9 775.9 592.2 776.9 591.5 777.9 590.7 778.9 589.8 779.9 588.9 780.9 587.8 781.9 586.7 782.9 585.5 783.9 584.2 784.9 582.9 785.9 581.6 786.9 580.1 787.9 578.7 788.9 577.2 789.9 575.7 790.9 574.1 791.9 572.5 792.9 571.0 793.9 569.4 794.9 567.8 795.9 566.2 796.9 564.6 797.9 563.1 798.9 561.6 799.9 560.1 800.9 558.6 801.9 557.2 802.9 555.8 803.9 554.5 804.9 553.2 805.9 552.0 806.9 550.9 807.9 549.8 808.9 548.8 809.9 547.8 810.9 547.0 811.9 546.2 812.9 545.4 813.9 544.8 814.9 544.1 815.9 543.6 816.9 543.1 817.9 542.7 818.9 542.3 819.9 542.0 820.9 541.8 821.9 541.6 822.9 541.5 823.9 541.4 824.9 541.4 825.9 541.5 826.9 541.6 827.9 541.8 828.9 542.0 829.9 542.3 830.9 542.7 831.9 543.1 832.9 543.5 833.9 544.1 834.9 544.6 835.9 545.2 836.9 545.9 837.9 546.6 838.9 547.4 839.9 548.2 840.9 549.0 841.9 549.9 842.9 550.8 843.9 551.8 844.9 552.8 845.9 553.8 846.9 554.9 847.9 556.0 848.9 557.1 849.9 558.3 850.9 559.5 851.9 560.7 852.9 561.9 853.9 563.2 854.9 564.5 855.9 565.8 856.9 567.1 857.9 568.5 858.9 569.9 859.9 571.2 860.9 572.6 861.9 574.0 862.9 575.4 863.9 576.8 864.9 578.1 865.9 579.5 866.9 580.8 867.9 582.1 868.9 583.3 869.9 584.6 870.9 585.8 871.9 586.9 872.9 588.0 873.9 589.0 874.9 590.0 875.9 591.0 876.9 591.8 877.9 592.6 878.9 593.3 879.9 593.9 880.9 594.5 881.9 594.9 882.9 595.3 883.9 595.6 884.9 595.8 885.9 595.8 886.9 595.8 887.9 595.8 888.9 595.6 889.9 595.4 890.9 595.1 891.9 594.7 892.9 594.3 893.9 593.8 894.9 593.3 895.9 592.7 896.9 592.1 897.9 591.4 898.9 590.7 899.9 589.9 900.9 589.2 901.9 588.4 902.9 587.5 903.9 586.7 904.9 585.8 905.9 585.0 906.9 584.1 907.9 583.2 908.9 582.3 909.9 581.4 910.9 580.6 911.9 579.7 912.9 578.8 913.9 578.0 914.9 577.2 915.9 576.4 916.9 575.6 917.9 574.9 918.9 574.2 919.9 573.5 920.9 572.8 921.9 572.2 922.9 571.6 923.9 571.1 924.9 570.6 925.9 570.2 926.9 569.8 927.9 569.4 928.9 569.2 929.9 569.0 930.9 568.8 931.9 568.7 932.9 568.7 933.9 568.8 934.9 568.9 935.9 569.1 936.9 569.3 937.9 569.7 938.9 570.1 939.9 570.5 940.9 571.0 941.9 571.6 942.9 572.2 943.9 572.9 944.9 573.6 945.9 574.4 946.9 575.2 947.9 576.0 948.9 576.9 949.9 577.8 950.9 578.7 951.9 579.6 952.9 580.6 953.9 581.6 954.9 582.6 955.9 583.6 956.9 584.7 957.9 585.7 958.9 586.7 959.9 587.8 960.9 588.8 961.9 589.8 962.9 590.8 963.9 591.9 964.9 592.9 965.9 593.8 966.9 594.8 967.9 595.8 968.9 596.7 969.9 597.6 970.9 598.5 971.9 599.4 972.9 600.3 973.9 601.1 974.9 601.9 975.9 602.6 976.9 603.3 977.9 604.0 978.9 604.7 979.9 605.3 980.9 605.9 981.9 606.4 982.9 606.8 983.9 607.3 984.9 607.7 985.9 608.0 986.9 608.2 987.9 608.5 988.9 608.6 989.9 608.7 990.9 608.8 991.9 608.7 992.9 608.6 993.9 608.5 994.9 608.2 995.9 607.9 996.9 607.6 997.9 607.1 998.9 606.6 999.9 606.0 1000.9 605.3 1001.9 604.5 1002.9 603.6 1003.9 602.7 1004.9 601.7 1005.9 600.5 1006.9 599.3 1007.9 598.0 1008.9 596.6 1009.9 595.1 1010.9 593.5 1011.9 591.7 1012.9 589.9 1013.9 588.0 1014.9 586.0 1015.9 584.0 1016.9 581.9 1017.9 579.7 1018.9 577.4 1019.9 575.1 1020.9 572.8 1021.9 570.5 1022.9 568.1 1023.9 565.7 1024.9 563.4 1025.9 561.0 1026.9 558.6 1027.9 556.3 1028.9 554.0 1029.9 551.7 1030.9 549.4 1031.9 547.2 1032.9 545.1 1033.9 543.0 1034.9 541.1 1035.9 539.1 1036.9 537.3 1037.9 535.6 1038.9 534.0 1039.9 532.5 1040.9 531.0 1041.9 529.7 1042.9 528.5 1043.9 527.4 1044.9 526.4 1045.9 525.5 1046.9 524.7 1047.9 523.9 1048.9 523.3 1049.9 522.8 1050.9 522.4 1051.9 522.2 1052.9 522.0 1053.9 521.9 1054.9 521.9 1055.9 522.0 1056.9 522.3 1057.9 522.6 1058.9 523.1 1059.9 523.6 1060.9 524.3 1061.9 525.0 1062.9 525.9 1063.9 526.9 1064.9 528.0 1065.9 529.2 1066.9 530.5 1067.9 531.9 1068.9 533.4 1069.9 535.0 1070.9 536.7 1071.9 538.5 1072.9 540.3 1073.9 542.1 1074.9 544.0 1075.9 545.9 1076.9 547.8 1077.9 549.7 1078.9 551.6 1079.9 553.5 1080.9 555.3 1081.9 557.1 1082.9 558.9 1083.9 560.5 1084.9 562.1 1085.9 563.6 1086.9 565.0 1087.9 566.3 1088.9 567.4 1089.9 568.4 1090.9 569.3 1091.9 570.0 1092.9 570.6 1093.9 570.9 1094.9 571.1 1095.9 571.1 1096.9 570.9 1097.9 570.4 1098.9 569.7 1099.9 568.8 1100.9 567.6 1101.9 566.2 1102.9 564.5 1103.9 562.4 1104.9 560.2 1105.9 557.7 1106.9 555.0 1107.9 552.2 1108.9 549.3 1109.9 546.4 1110.9 543.5 1111.9 540.7 1112.9 538.0 1113.9 535.4 1114.9 533.0 1115.9 530.7 1116.9 528.4 1117.9 526.4 1118.9 524.4 1119.9 522.5 1120.9 520.8 1121.9 519.2 1122.9 517.7 1123.9 516.3 1124.9 515.0 1125.9 513.8 1126.9 512.7 1127.9 511.7 1128.9 510.9 1129.9 510.1 1130.9 509.4 1131.9 508.8 1132.9 508.4 1133.9 508.0 1134.9 507.7 1135.9 507.5 1136.9 507.4 1137.9 507.4 1138.9 507.4 1139.9 507.6 1140.9 507.8 1141.9 508.1 1142.9 508.5 1143.9 509.0 1144.9 509.6 1145.9 510.2 1146.9 510.9 1147.9 511.7 1148.9 512.6 1149.9 513.5 1150.9 514.5 1151.9 515.6 1152.9 516.7 1153.9 517.9 1154.9 519.1 1155.9 520.5 1156.9 521.8 1157.9 523.3 1158.9 524.8 1159.9 526.3 1160.9 527.9 1161.9 529.6 1162.9 531.3 1163.9 533.1 1164.9 534.9 1165.9 536.7 1166.9 538.6 1167.9 540.5 1168.9 542.5 1169.9 544.5 1170.9 546.6 1171.9 548.6 1172.9 550.7 1173.9 552.8 1174.9 555.0 1175.9 557.1 1176.9 559.2 1177.9 561.4 1178.9 563.6 1179.9 565.7 1180.9 567.9 1181.9 570.0 1182.9 572.2 1183.9 574.3 1184.9 576.4 1185.9 578.5 1186.9 580.5 1187.9 582.5 1188.9 584.5 1189.9 586.5 1190.9 588.4 1191.9 590.3 1192.9 592.1 1193.9 593.9 1194.9 595.6 1195.9 597.3 1196.9 598.9 1197.9 600.5 1198.9 602.0 1199.9 603.4 1200.9 604.7 1201.9 606.0 1202.9 607.2 1203.9 608.3 1204.9 609.3 1205.9 610.2 1206.9 611.0 1207.9 611.8 1208.9 612.4 1209.9 612.9 1210.9 613.4 1211.9 613.7 1212.9 613.9 1213.9 613.9 1214.9 613.9 1215.9 613.7 1216.9 613.4 1217.9 613.0 1218.9 612.5 1219.9 611.9 1220.9 611.2 1221.9 610.4 1222.9 609.5 1223.9 608.5 1224.9 607.4 1225.9 606.3 1226.9 605.2 1227.9 603.9 1228.9 602.6 1229.9 601.3 1230.9 599.9 1231.9 598.5 1232.9 597.1 1233.9 595.7 1234.9 594.2 1235.9 592.7 1236.9 591.2 1237.9 589.7 1238.9 588.3 1239.9 586.8 1240.9 585.3 1241.9 583.9 1242.9 582.5 1243.9 581.1 1244.9 579.8 1245.9 578.5 1246.9 577.2 1247.9 576.0 1248.9 574.8 1249.9 573.7 1250.9 572.7 1251.9 571.7 1252.9 570.7 1253.9 569.9 1254.9 569.1 1255.9 568.4 1256.9 567.7 1257.9 567.2 1258.9 566.7 1259.9 566.3 1260.9 566.0 1261.9 565.8 1262.9 565.7 1263.9 565.7 1264.9 565.9 1265.9 566.1 1266.9 566.5 1267.9 566.9 1268.9 567.5 1269.9 568.3 1270.9 569.1 1271.9 570.0 1272.9 570.9 1273.9 572.0 1274.9 573.0 1275.9 574.1 1276.9 575.2 1277.9 576.2 1278.9 577.2 1279.9 578.2 1280.9 579.0 1281.9 579.8 1282.9 580.5 1283.9 581.1 1284.9 581.5 1285.9 581.8 1286.9 581.9 1287.9 581.8 1288.9 581.6 1289.9 581.3 1290.9 580.9 1291.9 580.4 1292.9 579.8 1293.9 579.2 1294.9 578.6 1295.9 577.9 1296.9 577.1 1297.9 576.4 1298.9 575.6 1299.9 574.8 1300.9 574.0 1301.9 573.2 1302.9 572.4 1303.9 571.6 1304.9 570.8 1305.9 570.0 1306.9 569.2 1307.9 568.5 1308.9 567.7 1309.9 567.0 1310.9 566.3 1311.9 565.7 1312.9 565.1 1313.9 564.5 1314.9 564.0 1315.9 563.5 1316.9 563.1 1317.9 562.8 1318.9 562.5 1319.9 562.2 1320.9 562.1 1321.9 562.0 1322.6 562.0 1322.6 683.6 Z"/>
<path fill="#5d50bd" d="M385.9 683.6 L385.9 671.5 386.9 661.5 387.9 652.6 388.9 644.8 389.9 638.0 390.9 631.9 391.9 626.6 392.9 621.8 393.9 617.5 394.9 613.6 395.9 610.0 396.9 606.5 397.9 603.1 398.9 599.9 399.9 596.8 400.9 593.9 401.9 591.1 402.9 588.4 403.9 585.9 404.9 583.5 405.9 581.3 406.9 579.2 407.9 577.3 408.9 575.5 409.9 573.9 410.9 572.4 411.9 571.1 412.9 569.9 413.9 568.9 414.9 568.0 415.9 567.3 416.9 566.7 417.9 566.2 418.9 565.9 419.9 565.7 420.9 565.7 421.9 565.7 422.9 565.9 423.9 566.2 424.9 566.6 425.9 567.0 426.9 567.6 427.9 568.3 428.9 569.0 429.9 569.9 430.9 570.8 431.9 571.8 432.9 572.9 433.9 574.0 434.9 575.2 435.9 576.4 436.9 577.7 437.9 579.1 438.9 580.4 439.9 581.9 440.9 583.4 441.9 584.9 442.9 586.4 443.9 588.0 444.9 589.5 445.9 591.1 446.9 592.8 447.9 594.4 448.9 596.0 449.9 597.7 450.9 599.3 451.9 601.0 452.9 602.6 453.9 604.2 454.9 605.8 455.9 607.4 456.9 608.9 457.9 610.5 458.9 611.9 459.9 613.4 460.9 614.8 461.9 616.1 462.9 617.4 463.9 618.6 464.9 619.8 465.9 620.9 466.9 621.9 467.9 622.9 468.9 623.8 469.9 624.6 470.9 625.3 471.9 625.9 472.9 626.4 473.9 626.8 474.9 627.1 475.9 627.2 476.9 627.3 477.9 627.2 478.9 627.1 479.9 626.7 480.9 626.3 481.9 625.7 482.9 625.0 483.9 624.1 484.9 623.0 485.9 621.8 486.9 620.5 487.9 619.0 488.9 617.3 489.9 615.4 490.9 613.4 491.9 611.4 492.9 609.3 493.9 607.1 494.9 605.0 495.9 602.9 496.9 601.0 497.9 599.1 498.9 597.4 499.9 595.8 500.9 594.3 501.9 593.0 502.9 591.7 503.9 590.6 504.9 589.6 505.9 588.6 506.9 587.8 507.9 587.1 508.9 586.5 509.9 585.9 510.9 585.5 511.9 585.2 512.9 584.9 513.9 584.8 514.9 584.7 515.9 584.8 516.9 584.9 517.9 585.2 518.9 585.5 519.9 585.9 520.9 586.4 521.9 587.0 522.9 587.6 523.9 588.3 524.9 589.1 525.9 590.0 526.9 590.9 527.9 591.8 528.9 592.9 529.9 593.9 530.9 595.0 531.9 596.2 532.9 597.3 533.9 598.6 534.9 599.8 535.9 601.1 536.9 602.3 537.9 603.6 538.9 604.9 539.9 606.3 540.9 607.6 541.9 608.9 542.9 610.2 543.9 611.5 544.9 612.8 545.9 614.1 546.9 615.3 547.9 616.6 548.9 617.8 549.9 619.0 550.9 620.1 551.9 621.2 552.9 622.3 553.9 623.3 554.9 624.3 555.9 625.3 556.9 626.2 557.9 627.2 558.9 628.0 559.9 628.8 560.9 629.6 561.9 630.4 562.9 631.1 563.9 631.8 564.9 632.4 565.9 633.0 566.9 633.5 567.9 634.1 568.9 634.5 569.9 634.9 570.9 635.3 571.9 635.6 572.9 635.9 573.9 636.2 574.9 636.4 575.9 636.5 576.9 636.6 577.9 636.7 578.9 636.7 579.9 636.6 580.9 636.5 581.9 636.3 582.9 636.1 583.9 635.9 584.9 635.6 585.9 635.2 586.9 634.8 587.9 634.3 588.9 633.8 589.9 633.2 590.9 632.6 591.9 631.9 592.9 631.2 593.9 630.4 594.9 629.6 595.9 628.8 596.9 627.9 597.9 627.0 598.9 626.1 599.9 625.1 600.9 624.1 601.9 622.4 602.9 620.5 603.9 618.6 604.9 616.8 605.9 615.0 606.9 613.2 607.9 611.4 608.9 609.7 609.9 608.0 610.9 606.4 611.9 604.8 612.9 603.3 613.9 601.8 614.9 600.3 615.9 598.9 616.9 597.6 617.9 596.3 618.9 595.0 619.9 593.7 620.9 592.5 621.9 591.3 622.9 590.1 623.9 589.0 624.9 587.9 625.9 586.8 626.9 585.7 627.9 584.7 628.9 583.6 629.9 582.6 630.9 581.7 631.9 580.7 632.9 579.8 633.9 578.9 634.9 578.0 635.9 577.2 636.9 576.4 637.9 575.6 638.9 574.8 639.9 574.1 640.9 573.4 641.9 572.7 642.9 572.0 643.9 571.4 644.9 570.8 645.9 570.2 646.9 569.6 647.9 569.1 648.9 568.6 649.9 568.1 650.9 567.6 651.9 567.2 652.9 566.8 653.9 566.4 654.9 566.0 655.9 565.7 656.9 565.4 657.9 565.1 658.9 564.9 659.9 564.7 660.9 564.5 661.9 564.3 662.9 564.1 663.9 564.0 664.9 563.9 665.9 563.8 666.9 563.8 667.9 563.8 668.9 563.8 669.9 563.8 670.9 563.9 671.9 564.0 672.9 564.1 673.9 564.2 674.9 564.4 675.9 564.6 676.9 564.8 677.9 565.0 678.9 565.3 679.9 565.6 680.9 565.9 681.9 566.3 682.9 566.7 683.9 567.1 684.9 567.5 685.9 568.0 686.9 568.4 687.9 568.9 688.9 569.5 689.9 570.0 690.9 570.6 691.9 571.3 692.9 571.9 693.9 572.6 694.9 573.3 695.9 574.0 696.9 574.7 697.9 575.5 698.9 576.3 699.9 577.1 700.9 578.0 701.9 578.9 702.9 579.8 703.9 580.7 704.9 581.7 705.9 582.7 706.9 583.7 707.9 584.8 708.9 585.8 709.9 586.9 710.9 588.1 711.9 589.2 712.9 590.4 713.9 591.6 714.9 592.9 715.9 594.1 716.9 595.4 717.9 596.7 718.9 598.1 719.9 599.4 720.9 600.8 721.9 602.3 722.9 603.7 723.9 605.2 724.9 606.7 725.9 608.3 726.9 609.8 727.9 611.4 728.9 613.0 729.9 614.6 730.9 616.3 731.9 617.9 732.9 619.6 733.9 621.2 734.9 622.8 735.9 623.7 736.9 624.0 737.9 624.2 738.9 624.5 739.9 624.8 740.9 625.1 741.9 625.4 742.9 625.7 743.9 626.0 744.9 626.4 745.9 626.7 746.9 627.0 747.9 627.3 748.9 627.6 749.9 627.9 750.9 628.2 751.9 628.5 752.9 628.7 753.9 628.9 754.9 629.1 755.9 629.3 756.9 629.4 757.9 629.4 758.9 629.5 759.9 629.5 760.9 629.4 761.9 629.3 762.9 629.2 763.9 629.0 764.9 628.8 765.9 628.5 766.9 628.2 767.9 627.9 768.9 627.5 769.9 627.1 770.9 626.6 771.9 626.1 772.9 625.6 773.9 625.0 774.9 624.4 775.9 623.7 776.9 623.1 777.9 622.3 778.9 621.6 779.9 620.8 780.9 620.0 781.9 619.1 782.9 618.2 783.9 617.3 784.9 616.3 785.9 615.3 786.9 614.3 787.9 613.2 788.9 612.1 789.9 611.0 790.9 609.9 791.9 608.7 792.9 607.5 793.9 606.4 794.9 605.2 795.9 604.1 796.9 603.0 797.9 602.0 798.9 601.0 799.9 600.0 800.9 599.1 801.9 598.2 802.9 597.3 803.9 596.5 804.9 595.7 805.9 595.0 806.9 594.3 807.9 593.6 808.9 593.0 809.9 592.4 810.9 591.9 811.9 591.4 812.9 590.9 813.9 590.5 814.9 590.1 815.9 589.7 816.9 589.4 817.9 589.1 818.9 588.9 819.9 588.7 820.9 588.5 821.9 588.4 822.9 588.3 823.9 588.2 824.9 588.2 825.9 588.2 826.9 588.3 827.9 588.4 828.9 588.5 829.9 588.7 830.9 588.9 831.9 589.1 832.9 589.4 833.9 589.7 834.9 590.1 835.9 590.5 836.9 590.9 837.9 591.3 838.9 591.8 839.9 592.4 840.9 592.9 841.9 593.5 842.9 594.1 843.9 594.8 844.9 595.5 845.9 596.3 846.9 597.0 847.9 597.8 848.9 598.7 849.9 599.5 850.9 600.5 851.9 601.4 852.9 602.3 853.9 603.3 854.9 604.3 855.9 605.3 856.9 606.3 857.9 607.3 858.9 608.3 859.9 609.2 860.9 610.2 861.9 611.2 862.9 612.1 863.9 613.1 864.9 614.0 865.9 614.8 866.9 615.7 867.9 616.5 868.9 617.2 869.9 617.9 870.9 618.6 871.9 619.2 872.9 619.7 873.9 620.2 874.9 620.7 875.9 621.0 876.9 621.3 877.9 621.5 878.9 621.7 879.9 621.8 880.9 621.9 881.9 621.9 882.9 621.8 883.9 621.7 884.9 621.5 885.9 621.3 886.9 621.1 887.9 620.8 888.9 620.4 889.9 620.0 890.9 619.6 891.9 619.1 892.9 618.6 893.9 618.0 894.9 617.4 895.9 616.7 896.9 616.1 897.9 615.4 898.9 614.6 899.9 613.9 900.9 613.1 901.9 612.3 902.9 611.4 903.9 610.6 904.9 609.7 905.9 608.8 906.9 607.9 907.9 607.0 908.9 606.1 909.9 605.2 910.9 604.3 911.9 603.4 912.9 602.5 913.9 601.6 914.9 600.7 915.9 599.9 916.9 599.1 917.9 598.3 918.9 597.5 919.9 596.7 920.9 596.0 921.9 595.3 922.9 594.7 923.9 594.1 924.9 593.6 925.9 593.1 926.9 592.6 927.9 592.2 928.9 591.9 929.9 591.6 930.9 591.4 931.9 591.3 932.9 591.2 933.9 591.2 934.9 591.3 935.9 591.5 936.9 591.7 937.9 592.0 938.9 592.4 939.9 592.8 940.9 593.3 941.9 593.9 942.9 594.5 943.9 595.1 944.9 595.8 945.9 596.6 946.9 597.4 947.9 598.3 948.9 599.2 949.9 600.1 950.9 601.0 951.9 602.0 952.9 603.1 953.9 604.1 954.9 605.2 955.9 606.2 956.9 607.4 957.9 608.5 958.9 609.6 959.9 610.7 960.9 611.9 961.9 613.0 962.9 614.2 963.9 615.3 964.9 616.4 965.9 617.6 966.9 618.7 967.9 619.8 968.9 620.8 969.9 621.9 970.9 622.9 971.9 623.9 972.9 624.9 973.9 625.8 974.9 626.7 975.9 627.6 976.9 628.4 977.9 629.2 978.9 629.9 979.9 630.6 980.9 631.2 981.9 631.7 982.9 632.2 983.9 632.7 984.9 633.0 985.9 633.3 986.9 633.5 987.9 633.7 988.9 633.8 989.9 633.8 990.9 633.7 991.9 633.6 992.9 633.4 993.9 633.2 994.9 632.9 995.9 632.5 996.9 632.1 997.9 631.6 998.9 631.1 999.9 630.6 1000.9 629.9 1001.9 629.3 1002.9 628.6 1003.9 627.8 1004.9 627.0 1005.9 626.2 1006.9 625.3 1007.9 624.4 1008.9 623.4 1009.9 622.4 1010.9 621.4 1011.9 620.4 1012.9 619.3 1013.9 618.2 1014.9 617.1 1015.9 616.0 1016.9 614.8 1017.9 613.6 1018.9 612.5 1019.9 611.3 1020.9 610.1 1021.9 608.9 1022.9 607.8 1023.9 606.6 1024.9 605.4 1025.9 604.3 1026.9 603.2 1027.9 602.1 1028.9 601.0 1029.9 599.9 1030.9 598.9 1031.9 597.9 1032.9 596.9 1033.9 596.0 1034.9 595.1 1035.9 594.3 1036.9 593.5 1037.9 592.8 1038.9 592.1 1039.9 591.5 1040.9 590.9 1041.9 590.4 1042.9 589.9 1043.9 589.5 1044.9 589.1 1045.9 588.7 1046.9 588.4 1047.9 588.1 1048.9 587.9 1049.9 587.7 1050.9 587.5 1051.9 587.4 1052.9 587.2 1053.9 587.2 1054.9 587.1 1055.9 587.1 1056.9 587.1 1057.9 587.1 1058.9 587.2 1059.9 587.2 1060.9 587.3 1061.9 587.4 1062.9 587.5 1063.9 587.7 1064.9 587.8 1065.9 588.0 1066.9 588.1 1067.9 588.3 1068.9 588.5 1069.9 588.7 1070.9 588.9 1071.9 589.1 1072.9 589.3 1073.9 589.5 1074.9 589.7 1075.9 590.0 1076.9 590.2 1077.9 590.4 1078.9 590.6 1079.9 590.9 1080.9 591.1 1081.9 591.3 1082.9 591.5 1083.9 591.7 1084.9 592.0 1085.9 592.2 1086.9 592.4 1087.9 592.6 1088.9 592.8 1089.9 592.9 1090.9 593.1 1091.9 593.3 1092.9 593.4 1093.9 593.6 1094.9 593.7 1095.9 593.8 1096.9 593.9 1097.9 594.0 1098.9 594.1 1099.9 594.2 1100.9 594.2 1101.9 594.2 1102.9 594.3 1103.9 594.2 1104.9 594.2 1105.9 594.2 1106.9 594.1 1107.9 594.0 1108.9 593.9 1109.9 593.8 1110.9 593.6 1111.9 593.5 1112.9 593.3 1113.9 593.0 1114.9 592.8 1115.9 592.5 1116.9 592.2 1117.9 591.9 1118.9 591.4 1119.9 589.7 1120.9 588.2 1121.9 586.8 1122.9 585.5 1123.9 584.3 1124.9 583.2 1125.9 582.2 1126.9 581.3 1127.9 580.5 1128.9 579.8 1129.9 579.2 1130.9 578.7 1131.9 578.3 1132.9 577.9 1133.9 577.7 1134.9 577.5 1135.9 577.4 1136.9 577.4 1137.9 577.5 1138.9 577.6 1139.9 577.8 1140.9 578.1 1141.9 578.5 1142.9 578.9 1143.9 579.4 1144.9 579.9 1145.9 580.5 1146.9 581.2 1147.9 581.9 1148.9 582.7 1149.9 583.5 1150.9 584.4 1151.9 585.3 1152.9 586.3 1153.9 587.3 1154.9 588.3 1155.9 589.4 1156.9 590.6 1157.9 591.7 1158.9 592.9 1159.9 594.2 1160.9 595.4 1161.9 596.7 1162.9 598.1 1163.9 599.4 1164.9 600.7 1165.9 602.1 1166.9 603.5 1167.9 604.9 1168.9 606.4 1169.9 607.8 1170.9 609.2 1171.9 610.7 1172.9 612.1 1173.9 613.6 1174.9 615.0 1175.9 616.5 1176.9 618.0 1177.9 619.4 1178.9 620.8 1179.9 622.3 1180.9 622.8 1181.9 623.3 1182.9 623.8 1183.9 624.3 1184.9 624.7 1185.9 625.1 1186.9 625.4 1187.9 625.8 1188.9 626.2 1189.9 626.7 1190.9 627.2 1191.9 627.7 1192.9 628.3 1193.9 628.9 1194.9 629.6 1195.9 630.3 1196.9 631.0 1197.9 631.8 1198.9 632.5 1199.9 633.3 1200.9 634.0 1201.9 634.8 1202.9 635.5 1203.9 636.2 1204.9 636.8 1205.9 637.4 1206.9 638.0 1207.9 638.5 1208.9 638.9 1209.9 639.3 1210.9 639.6 1211.9 639.8 1212.9 639.9 1213.9 639.9 1214.9 639.8 1215.9 639.6 1216.9 639.3 1217.9 638.9 1218.9 638.4 1219.9 637.8 1220.9 637.2 1221.9 636.4 1222.9 635.6 1223.9 634.7 1224.9 633.8 1225.9 632.8 1226.9 631.7 1227.9 630.7 1228.9 629.6 1229.9 628.4 1230.9 627.3 1231.9 626.1 1232.9 625.0 1233.9 623.8 1234.9 622.6 1235.9 621.5 1236.9 620.4 1237.9 619.3 1238.9 618.2 1239.9 617.2 1240.9 616.2 1241.9 615.2 1242.9 614.4 1243.9 613.5 1244.9 612.7 1245.9 612.0 1246.9 611.3 1247.9 610.6 1248.9 610.0 1249.9 609.4 1250.9 608.9 1251.9 608.4 1252.9 607.9 1253.9 607.5 1254.9 607.1 1255.9 606.7 1256.9 606.4 1257.9 606.1 1258.9 605.9 1259.9 605.6 1260.9 605.5 1261.9 605.3 1262.9 605.2 1263.9 605.0 1264.9 605.0 1265.9 604.9 1266.9 604.9 1267.9 604.9 1268.9 604.9 1269.9 604.9 1270.9 604.9 1271.9 605.0 1272.9 605.1 1273.9 605.1 1274.9 605.2 1275.9 605.3 1276.9 605.4 1277.9 605.5 1278.9 605.5 1279.9 605.6 1280.9 605.6 1281.9 605.6 1282.9 605.6 1283.9 605.6 1284.9 605.5 1285.9 605.4 1286.9 605.2 1287.9 605.1 1288.9 604.8 1289.9 604.6 1290.9 604.3 1291.9 603.9 1292.9 603.5 1293.9 603.0 1294.9 602.4 1295.9 601.8 1296.9 601.1 1297.9 600.4 1298.9 599.7 1299.9 598.9 1300.9 598.1 1301.9 597.2 1302.9 596.3 1303.9 595.5 1304.9 594.6 1305.9 593.7 1306.9 592.8 1307.9 592.0 1308.9 591.1 1309.9 590.3 1310.9 589.5 1311.9 588.8 1312.9 588.1 1313.9 587.4 1314.9 586.8 1315.9 586.3 1316.9 585.8 1317.9 585.4 1318.9 585.1 1319.9 584.8 1320.9 584.7 1321.9 584.6 1322.6 584.7 1322.6 683.6 Z"/>
<path fill="#cd3663" d="M385.9 683.6 L385.9 683.6 386.9 678.5 387.9 671.9 388.9 665.0 389.9 658.2 390.9 652.0 391.9 646.4 392.9 641.3 393.9 636.7 394.9 632.6 395.9 628.9 396.9 625.6 397.9 622.5 398.9 619.6 399.9 617.0 400.9 614.6 401.9 612.4 402.9 610.3 403.9 608.5 404.9 606.8 405.9 605.3 406.9 604.0 407.9 602.8 408.9 601.7 409.9 600.8 410.9 600.0 411.9 599.3 412.9 598.8 413.9 598.3 414.9 598.0 415.9 597.7 416.9 597.5 417.9 597.4 418.9 597.4 419.9 597.4 420.9 597.5 421.9 597.7 422.9 598.0 423.9 598.3 424.9 598.7 425.9 599.2 426.9 599.7 427.9 600.2 428.9 600.9 429.9 601.5 430.9 602.2 431.9 603.0 432.9 603.8 433.9 604.6 434.9 605.5 435.9 606.4 436.9 607.4 437.9 608.3 438.9 609.3 439.9 610.4 440.9 611.4 441.9 612.5 442.9 613.5 443.9 614.6 444.9 615.7 445.9 616.8 446.9 617.9 447.9 619.0 448.9 620.1 449.9 621.2 450.9 622.3 451.9 623.4 452.9 624.5 453.9 625.6 454.9 626.6 455.9 627.6 456.9 628.6 457.9 629.6 458.9 630.6 459.9 631.5 460.9 632.4 461.9 633.2 462.9 634.0 463.9 634.7 464.9 635.4 465.9 636.1 466.9 636.7 467.9 637.2 468.9 637.7 469.9 638.1 470.9 638.4 471.9 638.7 472.9 638.9 473.9 639.1 474.9 639.1 475.9 639.1 476.9 639.0 477.9 638.8 478.9 638.5 479.9 638.1 480.9 637.6 481.9 637.0 482.9 636.4 483.9 635.6 484.9 634.7 485.9 633.7 486.9 632.6 487.9 631.3 488.9 630.0 489.9 628.5 490.9 626.9 491.9 625.3 492.9 623.6 493.9 621.8 494.9 620.1 495.9 618.3 496.9 616.5 497.9 614.8 498.9 613.1 499.9 611.4 500.9 609.9 501.9 608.4 502.9 607.1 503.9 605.9 504.9 604.9 505.9 604.0 506.9 603.4 507.9 602.8 508.9 602.5 509.9 602.3 510.9 602.2 511.9 602.2 512.9 602.3 513.9 602.5 514.9 602.7 515.9 603.0 516.9 603.3 517.9 603.7 518.9 604.1 519.9 604.5 520.9 604.9 521.9 605.3 522.9 605.8 523.9 606.3 524.9 606.8 525.9 607.4 526.9 608.0 527.9 608.7 528.9 609.4 529.9 610.1 530.9 611.0 531.9 611.8 532.9 612.8 533.9 613.8 534.9 614.8 535.9 616.0 536.9 617.2 537.9 618.5 538.9 619.9 539.9 621.3 540.9 622.9 541.9 624.5 542.9 626.1 543.9 627.9 544.9 629.6 545.9 631.4 546.9 633.2 547.9 635.0 548.9 636.8 549.9 638.6 550.9 640.3 551.9 642.0 552.9 643.7 553.9 645.3 554.9 646.9 555.9 648.4 556.9 649.9 557.9 651.3 558.9 652.6 559.9 653.9 560.9 655.1 561.9 656.2 562.9 657.2 563.9 658.2 564.9 659.1 565.9 659.8 566.9 660.5 567.9 661.1 568.9 661.5 569.9 661.9 570.9 662.1 571.9 662.2 572.9 662.2 573.9 662.0 574.9 661.7 575.9 661.3 576.9 660.7 577.9 660.0 578.9 659.2 579.9 658.3 580.9 657.3 581.9 656.2 582.9 655.0 583.9 653.7 584.9 652.4 585.9 650.9 586.9 649.4 587.9 647.9 588.9 646.3 589.9 644.6 590.9 642.9 591.9 641.1 592.9 639.3 593.9 637.5 594.9 635.7 595.9 633.8 596.9 631.9 597.9 630.0 598.9 628.1 599.9 626.2 600.9 624.3 601.9 622.4 602.9 620.5 603.9 618.6 604.9 616.8 605.9 615.0 606.9 613.2 607.9 611.4 608.9 609.7 609.9 608.0 610.9 606.4 611.9 604.8 612.9 603.3 613.9 601.8 614.9 600.3 615.9 598.9 616.9 597.6 617.9 596.3 618.9 595.0 619.9 593.7 620.9 592.5 621.9 591.3 622.9 590.1 623.9 589.0 624.9 587.9 625.9 586.8 626.9 585.7 627.9 584.7 628.9 583.6 629.9 582.6 630.9 581.7 631.9 580.7 632.9 579.8 633.9 578.9 634.9 578.0 635.9 577.2 636.9 576.4 637.9 575.6 638.9 574.8 639.9 574.1 640.9 573.4 641.9 572.7 642.9 572.0 643.9 571.4 644.9 570.8 645.9 570.2 646.9 569.6 647.9 569.1 648.9 568.6 649.9 568.1 650.9 567.6 651.9 567.2 652.9 566.8 653.9 566.4 654.9 566.0 655.9 565.7 656.9 565.4 657.9 565.1 658.9 564.9 659.9 564.7 660.9 564.5 661.9 564.3 662.9 564.1 663.9 564.0 664.9 563.9 665.9 563.8 666.9 563.8 667.9 563.8 668.9 563.8 669.9 563.8 670.9 563.9 671.9 564.0 672.9 564.1 673.9 564.2 674.9 564.4 675.9 564.6 676.9 564.8 677.9 565.0 678.9 565.3 679.9 565.6 680.9 565.9 681.9 566.3 682.9 566.7 683.9 567.1 684.9 567.5 685.9 568.0 686.9 568.4 687.9 568.9 688.9 569.5 689.9 570.0 690.9 570.6 691.9 571.3 692.9 571.9 693.9 572.6 694.9 573.3 695.9 574.0 696.9 574.7 697.9 575.5 698.9 576.3 699.9 577.1 700.9 578.0 701.9 578.9 702.9 579.8 703.9 580.7 704.9 581.7 705.9 582.7 706.9 583.7 707.9 584.8 708.9 585.8 709.9 586.9 710.9 588.1 711.9 589.2 712.9 590.4 713.9 591.6 714.9 592.9 715.9 594.1 716.9 595.4 717.9 596.7 718.9 598.1 719.9 599.4 720.9 600.8 721.9 602.3 722.9 603.7 723.9 605.2 724.9 606.7 725.9 608.3 726.9 609.8 727.9 611.4 728.9 613.0 729.9 614.6 730.9 616.3 731.9 617.9 732.9 619.6 733.9 621.2 734.9 622.8 735.9 624.5 736.9 626.1 737.9 627.7 738.9 629.3 739.9 630.9 740.9 632.5 741.9 634.0 742.9 635.5 743.9 636.9 744.9 638.4 745.9 639.7 746.9 641.1 747.9 642.4 748.9 643.6 749.9 644.8 750.9 645.9 751.9 646.9 752.9 647.9 753.9 648.8 754.9 649.6 755.9 650.4 756.9 651.1 757.9 651.7 758.9 652.2 759.9 652.6 760.9 652.9 761.9 653.1 762.9 653.2 763.9 653.2 764.9 653.1 765.9 652.9 766.9 652.5 767.9 652.1 768.9 651.7 769.9 651.1 770.9 650.4 771.9 649.7 772.9 648.9 773.9 648.0 774.9 647.1 775.9 646.1 776.9 645.0 777.9 643.9 778.9 642.8 779.9 641.6 780.9 640.4 781.9 639.2 782.9 637.9 783.9 636.6 784.9 635.3 785.9 634.0 786.9 632.6 787.9 631.3 788.9 629.9 789.9 628.6 790.9 627.3 791.9 626.0 792.9 624.7 793.9 623.4 794.9 622.2 795.9 621.0 796.9 619.8 797.9 618.6 798.9 617.5 799.9 616.5 800.9 615.5 801.9 614.5 802.9 613.6 803.9 612.7 804.9 611.8 805.9 611.0 806.9 610.3 807.9 609.5 808.9 608.8 809.9 608.2 810.9 607.6 811.9 607.0 812.9 606.5 813.9 606.0 814.9 605.6 815.9 605.2 816.9 604.8 817.9 604.5 818.9 604.2 819.9 604.0 820.9 603.8 821.9 603.7 822.9 603.6 823.9 603.5 824.9 603.5 825.9 603.5 826.9 603.5 827.9 603.6 828.9 603.7 829.9 603.9 830.9 604.1 831.9 604.4 832.9 604.7 833.9 605.0 834.9 605.4 835.9 605.8 836.9 606.2 837.9 606.7 838.9 607.3 839.9 607.9 840.9 608.5 841.9 609.1 842.9 609.8 843.9 610.6 844.9 611.4 845.9 612.2 846.9 613.0 847.9 613.9 848.9 614.9 849.9 615.8 850.9 616.9 851.9 617.9 852.9 619.0 853.9 620.1 854.9 621.2 855.9 622.3 856.9 623.4 857.9 624.6 858.9 625.7 859.9 626.8 860.9 628.0 861.9 629.1 862.9 630.2 863.9 631.2 864.9 632.3 865.9 633.3 866.9 634.3 867.9 635.3 868.9 636.2 869.9 637.0 870.9 637.9 871.9 638.6 872.9 639.3 873.9 640.0 874.9 640.5 875.9 641.0 876.9 641.5 877.9 641.9 878.9 642.2 879.9 642.4 880.9 642.6 881.9 642.7 882.9 642.8 883.9 642.8 884.9 642.7 885.9 642.6 886.9 642.4 887.9 642.2 888.9 641.9 889.9 641.6 890.9 641.2 891.9 640.7 892.9 640.2 893.9 639.7 894.9 639.1 895.9 638.4 896.9 637.7 897.9 637.0 898.9 636.2 899.9 635.3 900.9 634.4 901.9 633.5 902.9 632.6 903.9 631.6 904.9 630.5 905.9 629.5 906.9 628.4 907.9 627.3 908.9 626.2 909.9 625.1 910.9 624.0 911.9 622.9 912.9 621.8 913.9 620.7 914.9 619.6 915.9 618.6 916.9 617.5 917.9 616.5 918.9 615.5 919.9 614.5 920.9 613.6 921.9 612.7 922.9 611.9 923.9 611.1 924.9 610.4 925.9 609.7 926.9 609.1 927.9 608.6 928.9 608.1 929.9 607.7 930.9 607.4 931.9 607.1 932.9 607.0 933.9 606.9 934.9 606.9 935.9 607.1 936.9 607.3 937.9 607.6 938.9 608.0 939.9 608.4 940.9 609.0 941.9 609.6 942.9 610.2 943.9 611.0 944.9 611.7 945.9 612.6 946.9 613.5 947.9 614.4 948.9 615.4 949.9 616.4 950.9 617.4 951.9 618.4 952.9 619.5 953.9 620.6 954.9 621.8 955.9 622.9 956.9 624.0 957.9 625.2 958.9 626.3 959.9 627.4 960.9 628.5 961.9 629.6 962.9 630.7 963.9 631.8 964.9 632.9 965.9 633.9 966.9 634.9 967.9 635.9 968.9 636.9 969.9 637.9 970.9 638.8 971.9 639.7 972.9 640.5 973.9 641.3 974.9 642.1 975.9 642.9 976.9 643.6 977.9 644.2 978.9 644.9 979.9 645.5 980.9 646.0 981.9 646.5 982.9 646.9 983.9 647.3 984.9 647.6 985.9 647.9 986.9 648.1 987.9 648.2 988.9 648.4 989.9 648.4 990.9 648.4 991.9 648.4 992.9 648.3 993.9 648.1 994.9 647.9 995.9 647.7 996.9 647.4 997.9 647.1 998.9 646.7 999.9 646.3 1000.9 645.8 1001.9 645.4 1002.9 644.8 1003.9 644.3 1004.9 643.7 1005.9 643.1 1006.9 642.4 1007.9 641.7 1008.9 641.0 1009.9 640.3 1010.9 639.5 1011.9 638.7 1012.9 637.9 1013.9 637.1 1014.9 636.2 1015.9 635.4 1016.9 634.5 1017.9 633.6 1018.9 632.7 1019.9 631.8 1020.9 630.9 1021.9 630.0 1022.9 629.1 1023.9 628.2 1024.9 627.3 1025.9 626.4 1026.9 625.6 1027.9 624.7 1028.9 623.9 1029.9 623.1 1030.9 622.3 1031.9 621.5 1032.9 620.8 1033.9 620.1 1034.9 619.4 1035.9 618.8 1036.9 618.2 1037.9 617.6 1038.9 617.1 1039.9 616.7 1040.9 616.2 1041.9 615.8 1042.9 615.5 1043.9 615.2 1044.9 614.9 1045.9 614.7 1046.9 614.4 1047.9 614.3 1048.9 614.1 1049.9 614.1 1050.9 614.0 1051.9 614.0 1052.9 614.0 1053.9 614.0 1054.9 614.1 1055.9 614.2 1056.9 614.3 1057.9 614.5 1058.9 614.7 1059.9 614.9 1060.9 615.2 1061.9 615.5 1062.9 615.8 1063.9 616.1 1064.9 616.5 1065.9 616.9 1066.9 617.3 1067.9 617.8 1068.9 618.2 1069.9 618.8 1070.9 619.3 1071.9 620.0 1072.9 620.6 1073.9 621.4 1074.9 622.2 1075.9 623.1 1076.9 624.1 1077.9 625.1 1078.9 626.3 1079.9 627.6 1080.9 629.0 1081.9 630.5 1082.9 631.9 1083.9 633.4 1084.9 634.8 1085.9 636.1 1086.9 637.2 1087.9 638.2 1088.9 638.9 1089.9 639.5 1090.9 639.9 1091.9 640.0 1092.9 640.0 1093.9 639.8 1094.9 639.5 1095.9 638.9 1096.9 638.1 1097.9 637.1 1098.9 635.9 1099.9 634.6 1100.9 633.0 1101.9 631.2 1102.9 629.2 1103.9 627.1 1104.9 624.7 1105.9 622.2 1106.9 619.5 1107.9 616.8 1108.9 614.1 1109.9 611.4 1110.9 608.7 1111.9 606.1 1112.9 603.6 1113.9 601.3 1114.9 599.1 1115.9 597.0 1116.9 595.0 1117.9 593.1 1118.9 591.4 1119.9 589.7 1120.9 588.2 1121.9 586.8 1122.9 585.5 1123.9 584.3 1124.9 583.2 1125.9 582.2 1126.9 581.3 1127.9 580.5 1128.9 579.8 1129.9 579.2 1130.9 578.7 1131.9 578.3 1132.9 577.9 1133.9 577.7 1134.9 577.5 1135.9 577.4 1136.9 577.4 1137.9 577.5 1138.9 577.6 1139.9 577.8 1140.9 578.1 1141.9 578.5 1142.9 578.9 1143.9 579.4 1144.9 579.9 1145.9 580.5 1146.9 581.2 1147.9 581.9 1148.9 582.7 1149.9 583.5 1150.9 584.4 1151.9 585.3 1152.9 586.3 1153.9 587.3 1154.9 588.3 1155.9 589.4 1156.9 590.6 1157.9 591.7 1158.9 592.9 1159.9 594.2 1160.9 595.4 1161.9 596.7 1162.9 598.1 1163.9 599.4 1164.9 600.7 1165.9 602.1 1166.9 603.5 1167.9 604.9 1168.9 606.4 1169.9 607.8 1170.9 609.2 1171.9 610.7 1172.9 612.1 1173.9 613.6 1174.9 615.0 1175.9 616.5 1176.9 618.0 1177.9 619.4 1178.9 620.8 1179.9 622.3 1180.9 623.7 1181.9 625.1 1182.9 626.5 1183.9 627.9 1184.9 629.2 1185.9 630.6 1186.9 631.9 1187.9 633.2 1188.9 634.5 1189.9 635.7 1190.9 636.9 1191.9 638.1 1192.9 639.3 1193.9 640.4 1194.9 641.5 1195.9 642.6 1196.9 643.6 1197.9 644.5 1198.9 645.5 1199.9 646.4 1200.9 647.2 1201.9 648.0 1202.9 648.7 1203.9 649.4 1204.9 650.1 1205.9 650.7 1206.9 651.2 1207.9 651.6 1208.9 652.1 1209.9 652.4 1210.9 652.7 1211.9 652.9 1212.9 653.1 1213.9 653.1 1214.9 653.1 1215.9 653.1 1216.9 652.9 1217.9 652.7 1218.9 652.4 1219.9 652.1 1220.9 651.6 1221.9 651.1 1222.9 650.5 1223.9 649.8 1224.9 649.0 1225.9 648.1 1226.9 647.2 1227.9 646.2 1228.9 645.1 1229.9 644.0 1230.9 642.8 1231.9 641.7 1232.9 640.4 1233.9 639.2 1234.9 638.0 1235.9 636.7 1236.9 635.4 1237.9 634.2 1238.9 633.0 1239.9 631.8 1240.9 630.6 1241.9 629.4 1242.9 628.3 1243.9 627.3 1244.9 626.3 1245.9 625.4 1246.9 624.5 1247.9 623.7 1248.9 623.0 1249.9 622.5 1250.9 621.9 1251.9 621.5 1252.9 621.2 1253.9 621.0 1254.9 620.8 1255.9 620.7 1256.9 620.7 1257.9 620.7 1258.9 620.9 1259.9 621.0 1260.9 621.3 1261.9 621.6 1262.9 621.9 1263.9 622.3 1264.9 622.7 1265.9 623.2 1266.9 623.7 1267.9 624.3 1268.9 624.9 1269.9 625.5 1270.9 626.2 1271.9 626.8 1272.9 627.5 1273.9 628.2 1274.9 628.9 1275.9 629.7 1276.9 630.4 1277.9 631.1 1278.9 631.8 1279.9 632.5 1280.9 633.2 1281.9 633.8 1282.9 634.4 1283.9 634.9 1284.9 635.3 1285.9 635.6 1286.9 635.8 1287.9 635.9 1288.9 635.8 1289.9 635.6 1290.9 635.2 1291.9 634.7 1292.9 633.9 1293.9 633.0 1294.9 631.8 1295.9 630.5 1296.9 629.0 1297.9 627.4 1298.9 625.8 1299.9 624.1 1300.9 622.5 1301.9 620.9 1302.9 619.4 1303.9 618.1 1304.9 616.8 1305.9 615.7 1306.9 614.7 1307.9 613.8 1308.9 612.9 1309.9 612.1 1310.9 611.4 1311.9 610.7 1312.9 610.0 1313.9 609.3 1314.9 608.7 1315.9 608.0 1316.9 607.3 1317.9 606.6 1318.9 605.9 1319.9 605.1 1320.9 604.2 1321.9 603.2 1322.6 602.5 1322.6 683.6 Z"/><rect x="385" y="682.3" width="938" height="1.6" fill="#9a9a9a"/></svg>
<div class="a" style="left:383.80px;top:695.87px;font-size:11.5px;line-height:11.5px;color:#464d4e;">1</div>
<div class="a" style="left:408.80px;top:695.87px;font-size:11.5px;line-height:11.5px;color:#464d4e;">2</div>
<div class="a" style="left:433.80px;top:695.87px;font-size:11.5px;line-height:11.5px;color:#464d4e;">3</div>
<div class="a" style="left:459.80px;top:695.87px;font-size:11.5px;line-height:11.5px;color:#464d4e;">4</div>
<div class="a" style="left:485.80px;top:695.87px;font-size:11.5px;line-height:11.5px;color:#464d4e;">5</div>
<div class="a" style="left:511.80px;top:695.87px;font-size:11.5px;line-height:11.5px;color:#464d4e;">6</div>
<div class="a" style="left:537.80px;top:695.87px;font-size:11.5px;line-height:11.5px;color:#464d4e;">7</div>
<div class="a" style="left:562.80px;top:695.87px;font-size:11.5px;line-height:11.5px;color:#464d4e;">8</div>
<div class="a" style="left:588.80px;top:695.87px;font-size:11.5px;line-height:11.5px;color:#464d4e;">9</div>
<div class="a" style="left:615.61px;top:695.87px;font-size:11.5px;line-height:11.5px;color:#464d4e;">10</div>
<div class="a" style="left:647.04px;top:695.87px;font-size:11.5px;line-height:11.5px;color:#464d4e;">11</div>
<div class="a" style="left:677.61px;top:695.87px;font-size:11.5px;line-height:11.5px;color:#464d4e;">12</div>
<div class="a" style="left:709.61px;top:695.87px;font-size:11.5px;line-height:11.5px;color:#464d4e;">13</div>
<div class="a" style="left:741.61px;top:695.87px;font-size:11.5px;line-height:11.5px;color:#464d4e;">14</div>
<div class="a" style="left:774.61px;top:695.87px;font-size:11.5px;line-height:11.5px;color:#464d4e;">15</div>
<div class="a" style="left:806.61px;top:695.87px;font-size:11.5px;line-height:11.5px;color:#464d4e;">16</div>
<div class="a" style="left:836.61px;top:695.87px;font-size:11.5px;line-height:11.5px;color:#464d4e;">17</div>
<div class="a" style="left:869.61px;top:695.87px;font-size:11.5px;line-height:11.5px;color:#464d4e;">18</div>
<div class="a" style="left:901.61px;top:695.87px;font-size:11.5px;line-height:11.5px;color:#464d4e;">19</div>
<div class="a" style="left:934.61px;top:695.87px;font-size:11.5px;line-height:11.5px;color:#464d4e;">20</div>
<div class="a" style="left:968.61px;top:695.87px;font-size:11.5px;line-height:11.5px;color:#464d4e;">21</div>
<div class="a" style="left:1000.61px;top:695.87px;font-size:11.5px;line-height:11.5px;color:#464d4e;">22</div>
<div class="a" style="left:1035.61px;top:695.87px;font-size:11.5px;line-height:11.5px;color:#464d4e;">23</div>
<div class="a" style="left:1070.61px;top:695.87px;font-size:11.5px;line-height:11.5px;color:#464d4e;">24</div>
<div class="a" style="left:1104.61px;top:695.87px;font-size:11.5px;line-height:11.5px;color:#464d4e;">25</div>
<div class="a" style="left:1139.61px;top:695.87px;font-size:11.5px;line-height:11.5px;color:#464d4e;">26</div>
<div class="a" style="left:1172.61px;top:695.87px;font-size:11.5px;line-height:11.5px;color:#464d4e;">27</div>
<div class="a" style="left:1207.61px;top:695.87px;font-size:11.5px;line-height:11.5px;color:#464d4e;">28</div>
<div class="a" style="left:1242.61px;top:695.87px;font-size:11.5px;line-height:11.5px;color:#464d4e;">29</div>
<div class="a" style="left:1276.61px;top:695.87px;font-size:11.5px;line-height:11.5px;color:#464d4e;">30</div>
<div class="a" style="left:1308.61px;top:695.87px;font-size:11.5px;line-height:11.5px;color:#464d4e;">31</div>
<div class="a" style="left:380.00px;top:710.69px;font-size:11px;line-height:11px;color:#464d4e;">Dec</div>
<div class="a" style="left:654px;top:739px;width:12px;height:12px;background:#0ac3b0;border-radius:2px"></div>
<div class="a" style="left:673.50px;top:738.00px;font-size:13px;line-height:13px;color:#50575a;">Twitter</div>
<div class="a" style="left:739.5px;top:739px;width:12px;height:12px;background:#5d50bd;border-radius:2px"></div>
<div class="a" style="left:759.00px;top:738.00px;font-size:13px;line-height:13px;color:#50575a;">Facebook</div>
<div class="a" style="left:840.5px;top:739px;width:12px;height:12px;background:#cd3663;border-radius:2px"></div>
<div class="a" style="left:860.00px;top:738.00px;font-size:13px;line-height:13px;color:#50575a;">Instagram</div>
<div class="a" style="left:943.5px;top:739px;width:12px;height:12px;background:#fec81c;border-radius:2px"></div>
<div class="a" style="left:963.00px;top:738.00px;font-size:13px;line-height:13px;color:#50575a;">LinkedIn</div>
<div class="a" style="left:345px;top:784px;width:978px;height:200px;border:1px solid #e3e3e3;border-radius:6px"></div>
<div class="a" style="left:360.00px;top:801.07px;font-size:11.5px;line-height:11.5px;color:#4a5151;">Audience Metrics</div>
<div class="a" style="left:1112.67px;top:801.07px;font-size:11.5px;line-height:11.5px;color:#4a5151;">Totals</div>
<div class="a" style="left:1256.19px;top:801.49px;font-size:11px;line-height:11px;color:#4a5151;">% Change</div>
<div class="a" style="left:360px;top:823px;width:948px;height:2px;background:#dcdcdc"></div>
<div class="a" style="left:360.00px;top:838.69px;font-size:17.5px;line-height:17.5px;color:#2b3131;-webkit-text-stroke:0.4px #2b3131;">Total Audience</div>
<div class="a" style="left:360px;top:858px;width:115px;height:1px;border-top:1px dotted #555"></div>
<div class="a" style="left:1088.02px;top:839.11px;font-size:17px;line-height:17px;font-weight:bold;color:#2b3131;letter-spacing:0.45px;">20,505</div>
<svg class="a" style="left:1262px;top:840px;" width="11" height="11" viewBox="0 0 11 11"><path d="M1 10 L9.5 1.5 M3.5 1.5 H9.5 V7.5" fill="none" stroke="#19b3a1" stroke-width="1.5"/></svg>
<div class="a" style="left:1278.66px;top:840.84px;font-size:12px;line-height:12px;color:#19b3a1;">7.7%</div>
<div class="a" style="left:1370px;top:16px;width:47px;height:47px;background:#2b7dd1;border-radius:50%"></div>
<svg class="a" style="left:1384px;top:30px;" width="19" height="19" viewBox="0 0 19 19"><path d="M8 3.5 H3 Q1.5 3.5 1.5 5 V15.5 Q1.5 17 3 17 H13.5 Q15 17 15 15.5 V10.5" fill="none" stroke="#fff" stroke-width="1.8" stroke-linecap="round"/><path d="M15.5 1.5 L17.5 3.5 L9.5 11.5 L6.5 12.5 L7.5 9.5 Z" fill="#fff"/></svg>
<svg class="a" style="left:1385px;top:85px;" width="16" height="18" viewBox="0 0 16 18"><path d="M8 1 Q9 1 9.2 2.2 Q12 3 12.4 6.5 L12.8 11 Q13.2 12.6 15 13.8 V14.5 H1 V13.8 Q2.8 12.6 3.2 11 L3.6 6.5 Q4 3 6.8 2.2 Q7 1 8 1 Z" fill="#2c3333"/><path d="M6 15.3 H10 Q9.8 17 8 17 Q6.2 17 6 15.3 Z" fill="#2c3333"/></svg>
<div class="a" style="left:1399px;top:81px;width:7px;height:7px;background:#2b7dd1;border-radius:50%"></div>
<svg class="a" style="left:1385px;top:132px;" width="17" height="17" viewBox="0 0 17 17"><circle cx="8.3" cy="8.8" r="7.4" fill="#2c3333"/><path d="M5.8 6.9 Q5.8 4.3 8.3 4.3 Q10.8 4.3 10.8 6.6 Q10.8 7.9 9.3 8.7 Q8.3 9.2 8.3 10.3" fill="none" stroke="#fff" stroke-width="2.1" stroke-linecap="round"/><circle cx="8.3" cy="13" r="1.25" fill="#fff"/></svg>
</div></body></html>
